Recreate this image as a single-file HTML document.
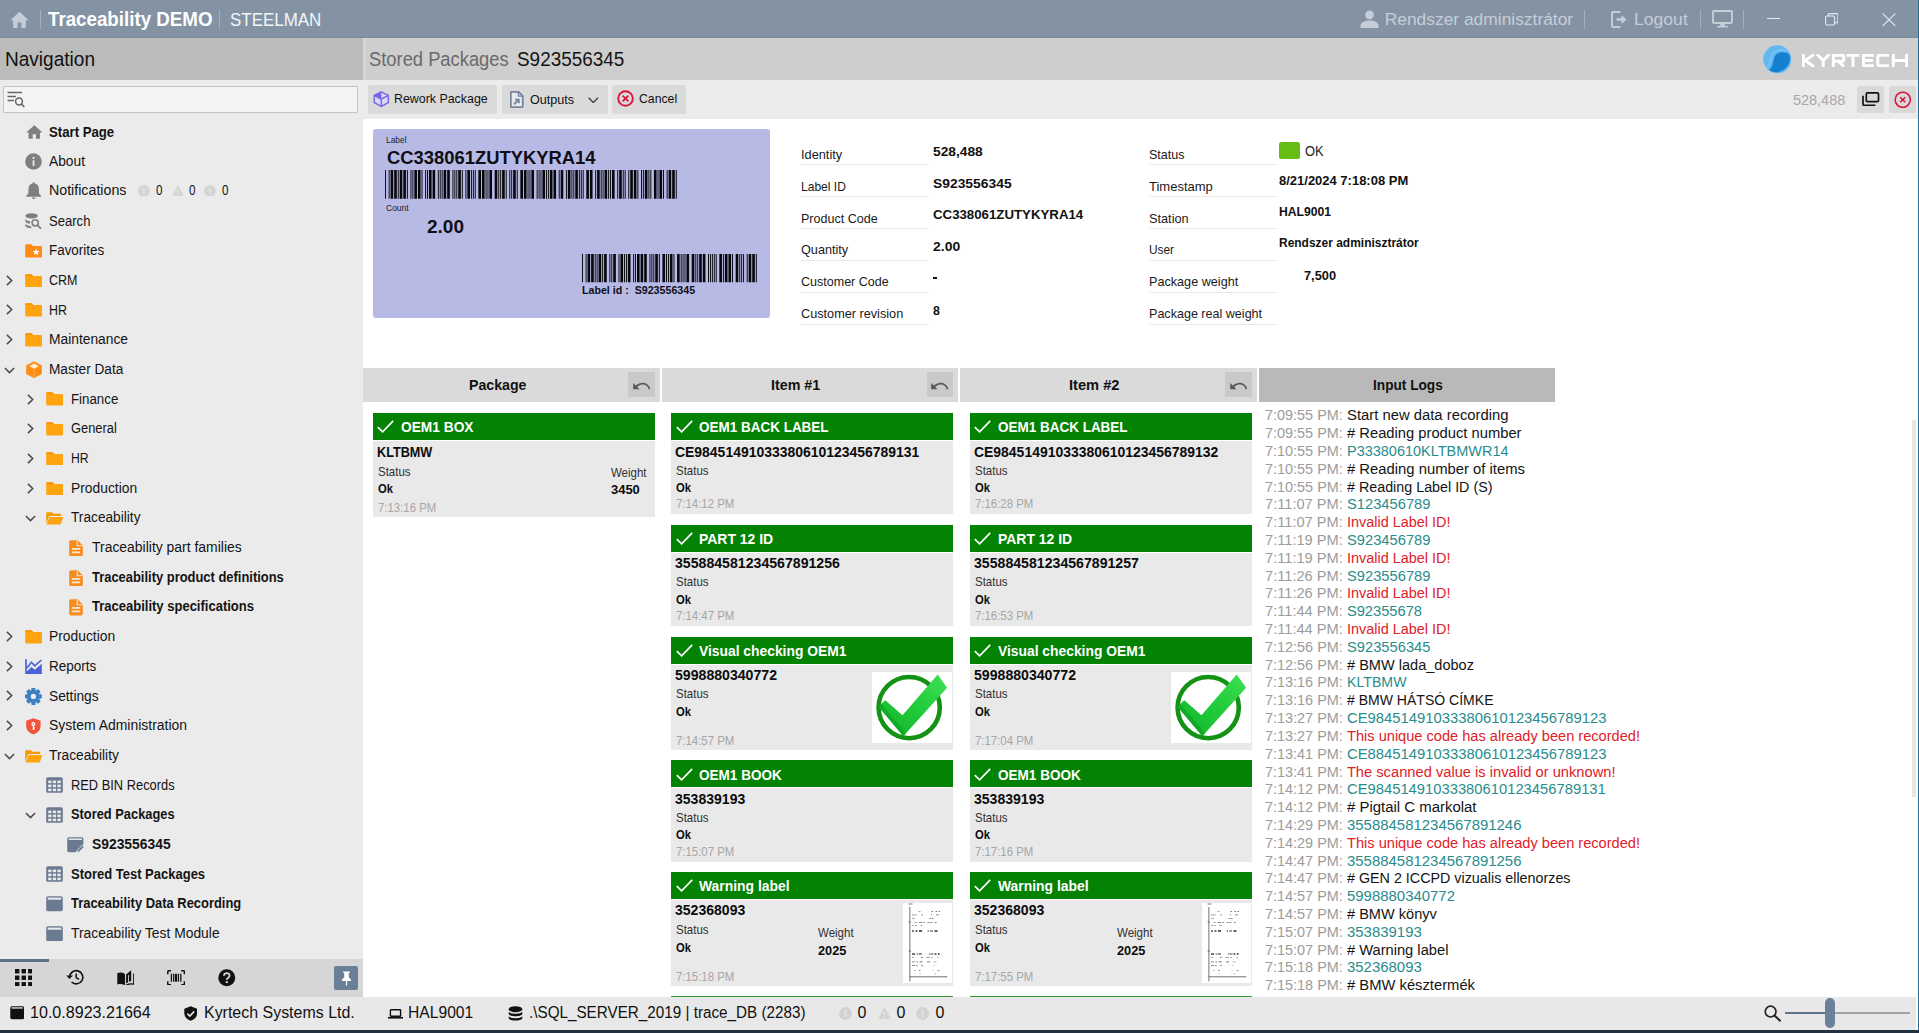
<!DOCTYPE html>
<html><head><meta charset="utf-8"><title>Traceability DEMO</title>
<style>
*{box-sizing:border-box;margin:0;padding:0}
html,body{width:1919px;height:1033px;overflow:hidden;background:#fff;font-family:"Liberation Sans",sans-serif;color:#111}
.a{position:absolute;display:block}
.t{position:absolute;white-space:pre;line-height:1;transform-origin:0 0;display:block}
</style></head><body>
<div class="a" style="left:0px;top:0px;width:1919px;height:38px;background:#8493a4;"></div>
<div class="a" style="left:0px;top:36.6px;width:1919px;height:1.4px;background:#7c8a9b;"></div>
<div class="a" style="left:0px;top:38px;width:362.5px;height:42px;background:#bbbbbb;"></div>
<div class="a" style="left:362.5px;top:38px;width:1557px;height:42px;background:#cecece;"></div>
<div class="a" style="left:362.5px;top:38px;width:3px;height:42px;background:#d6d6d6;"></div>
<div class="a" style="left:0px;top:80px;width:362.5px;height:880px;background:#ebebeb;"></div>
<div class="a" style="left:362.5px;top:80px;width:1557px;height:38.5px;background:#ebebeb;"></div>
<div class="a" style="left:0px;top:958.75px;width:362.5px;height:38.5px;background:#d6d6d6;"></div>
<div class="a" style="left:0px;top:958.75px;width:48.75px;height:3.25px;background:#5e7189;"></div>
<div class="a" style="left:0px;top:997px;width:1916.3px;height:32.7px;background:#e8e8e8;"></div>
<div class="a" style="left:0px;top:1029.7px;width:1919px;height:4px;background:#22313f;"></div>
<div class="a" style="left:1918px;top:0px;width:1.2px;height:1030px;background:#2c6a92;"></div>
<svg class="a" style="left:9.5px;top:10.5px;" width="19" height="17.5" viewBox="0 0 24 22"><path d="M12 1 L0.5 11.5 H4 V21.5 H9.5 V14.5 H14.5 V21.5 H20 V11.5 H23.5 Z" fill="#c5cdd7"/></svg>
<div class="a" style="left:40px;top:9.5px;width:1px;height:19px;background:#a3afbd;"></div>
<span class="t" style="left:47.50px;top:10.00px;font-size:19.3px;color:#fff;font-weight:700;transform:scaleX(0.9716);">Traceability DEMO</span>
<div class="a" style="left:218.7px;top:9.5px;width:1px;height:19px;background:#a3afbd;"></div>
<span class="t" style="left:230.30px;top:11.00px;font-size:18.2px;color:#f2f5f8;transform:scaleX(0.9312);">STEELMAN</span>
<svg class="a" style="left:1359.5px;top:9.7px;" width="19" height="18.3" viewBox="0 0 20 19"><circle cx="10" cy="5" r="4.6" fill="#c5cdd7"/><path d="M0.5 19 V16.5 C0.5 12.5 6 11 10 11 S19.5 12.5 19.5 16.5 V19 Z" fill="#c5cdd7"/></svg>
<span class="t" style="left:1384.70px;top:11.00px;font-size:17.4px;color:#c5cdd7;">Rendszer adminisztrátor</span>
<div class="a" style="left:1584px;top:9.5px;width:1px;height:19px;background:#a3afbd;"></div>
<svg class="a" style="left:1610.5px;top:10.5px;" width="16" height="17" viewBox="0 0 16 17"><path d="M9.5 1 H2 Q1 1 1 2 V15 Q1 16 2 16 H9.5" fill="none" stroke="#c5cdd7" stroke-width="1.9"/><path d="M5.5 7.2 H10.5 V4 L15.5 8.5 L10.5 13 V9.8 H5.5 Z" fill="#c5cdd7"/></svg>
<span class="t" style="left:1634.20px;top:11.00px;font-size:17.4px;color:#c5cdd7;transform:scaleX(1.0112);">Logout</span>
<div class="a" style="left:1700.3px;top:9.5px;width:1px;height:19px;background:#a3afbd;"></div>
<svg class="a" style="left:1711.5px;top:10px;" width="21" height="18" viewBox="0 0 21 18"><rect x="1" y="1" width="19" height="12" rx="1" fill="none" stroke="#c5cdd7" stroke-width="1.9"/><path d="M8.5 13.5 H12.5 L13.3 16 H16 V17.6 H5 V16 H7.7 Z" fill="#c5cdd7"/></svg>
<div class="a" style="left:1743px;top:9.5px;width:1px;height:19px;background:#a3afbd;"></div>
<div class="a" style="left:1767px;top:18.2px;width:12.5px;height:1.2px;background:#e6ebf0;"></div>
<svg class="a" style="left:1824.5px;top:13px;" width="13.5" height="12.5" viewBox="0 0 13.5 12.5"><rect x="0.6" y="3" width="9" height="9" rx="1.5" fill="none" stroke="#e6ebf0" stroke-width="1.1"/><path d="M3.2 3 V2 Q3.2 0.6 4.6 0.6 H11.5 Q12.9 0.6 12.9 2 V8.5 Q12.9 9.8 11.5 9.8 H9.8" fill="none" stroke="#e6ebf0" stroke-width="1.1"/></svg>
<svg class="a" style="left:1882px;top:13px;" width="14" height="13.5" viewBox="0 0 14 13.5"><path d="M0.7 0.7 L13.3 12.8 M13.3 0.7 L0.7 12.8" stroke="#e6ebf0" stroke-width="1.15" fill="none"/></svg>
<span class="t" style="left:5.30px;top:50.00px;font-size:19.7px;color:#111;transform:scaleX(0.9674);">Navigation</span>
<span class="t" style="left:369.30px;top:50.00px;font-size:19.7px;color:#6a6a6a;transform:scaleX(0.9317);">Stored Packages</span>
<span class="t" style="left:516.70px;top:50.00px;font-size:19.7px;color:#141414;transform:scaleX(0.9607);">S923556345</span>
<svg class="a" style="left:1763px;top:45.2px;" width="28.6" height="28.6" viewBox="0 0 29 29"><circle cx="14.5" cy="14.5" r="14.2" fill="#62b8f0"/><path d="M6.2 25.6 C11 21.5 9.5 14 13 10.2 C16.5 6.4 23 6.6 26.8 9.6 A14 14 0 0 1 6.2 25.6 Z" fill="#1680d0"/><path d="M3.6 23 C9 19.5 6.5 11.5 11 7.5 C14.5 4.5 20.5 4.2 24.6 6.6" fill="none" stroke="#8fd0fa" stroke-width="1.2" opacity=".7"/></svg>
<svg class="a" style="left:1802px;top:54.1px;" width="106" height="13" viewBox="0 0 106 13"><path d="M1.3 0 V13 M12 0.3 L3.2 6.5 L12 12.7" stroke="#fff" stroke-width="2.9" fill="none" stroke-linejoin="miter" stroke-linecap="butt"/><path d="M15 0.2 L21.2 6.6 L27.4 0.2 M21.2 6.4 V13" stroke="#fff" stroke-width="2.9" fill="none" stroke-linejoin="miter" stroke-linecap="butt"/><path d="M31.3 13 V1.3 H40 Q41.8 1.3 41.8 3 V5.6 Q41.8 7.3 40 7.3 H31.3 M36.5 7.3 L42 12.8" stroke="#fff" stroke-width="2.9" fill="none" stroke-linejoin="miter" stroke-linecap="butt"/><path d="M44.5 1.3 H57.5 M51 1.3 V13" stroke="#fff" stroke-width="2.9" fill="none" stroke-linejoin="miter" stroke-linecap="butt"/><path d="M72 1.3 H61.5 V11.7 H72 M61.5 6.5 H71" stroke="#fff" stroke-width="2.9" fill="none" stroke-linejoin="miter" stroke-linecap="butt"/><path d="M87 1.3 H77.5 Q75.8 1.3 75.8 3 V10 Q75.8 11.7 77.5 11.7 H87" stroke="#fff" stroke-width="2.9" fill="none" stroke-linejoin="miter" stroke-linecap="butt"/><path d="M91.3 0 V13 M104.6 0 V13 M91.3 6.5 H104.6" stroke="#fff" stroke-width="2.9" fill="none" stroke-linejoin="miter" stroke-linecap="butt"/></svg>
<div class="a" style="left:2.5px;top:85.5px;width:355px;height:27px;background:#f3f3f3;border:1px solid #c4c4c4;border-radius:1px;"></div>
<svg class="a" style="left:6.5px;top:90.5px;" width="18" height="17" viewBox="0 0 18 17"><path d="M0.5 1.5 H15 M0.5 5.5 H9 M0.5 9.5 H7" stroke="#666" stroke-width="1.5" fill="none"/><circle cx="12" cy="10.5" r="3.4" fill="none" stroke="#666" stroke-width="1.5"/><path d="M14.4 13 L17.3 16" stroke="#666" stroke-width="1.7"/></svg>
<div class="a" style="left:368px;top:85.4px;width:128.8px;height:28.2px;background:#dadada;border-radius:2px;"></div>
<div class="a" style="left:502.3px;top:85.4px;width:105.4px;height:28.2px;background:#dadada;border-radius:2px;"></div>
<div class="a" style="left:612.1px;top:85.4px;width:73.6px;height:28.2px;background:#dadada;border-radius:2px;"></div>
<svg class="a" style="left:373px;top:90.6px;" width="16.6" height="16.4" viewBox="0 0 17 17"><path d="M8.5 1 L15.8 4.6 V12 L8.5 16 L1.2 12 V4.6 Z" fill="#d9d6f7" stroke="#7467e6" stroke-width="1.5" stroke-linejoin="round"/><path d="M1.2 4.6 L8.5 8.4 L15.8 4.6 M8.5 8.4 V16" fill="none" stroke="#7467e6" stroke-width="1.5"/><path d="M8.5 1 L1.2 4.6 L8.5 8.4 Z" fill="#7467e6"/></svg>
<span class="t" style="left:394.20px;top:92.00px;font-size:13.3px;color:#111;transform:scaleX(0.9322);">Rework Package</span>
<svg class="a" style="left:510px;top:91.3px;" width="13.6" height="17" viewBox="0 0 13.6 17"><path d="M1.8 0.8 H8.6 L12.8 5 V15 Q12.8 16.2 11.6 16.2 H1.8 Q0.8 16.2 0.8 15 V1.8 Q0.8 0.8 1.8 0.8 Z" fill="#e6e9ee" stroke="#76859a" stroke-width="1.8"/><path d="M8.4 0.8 V5.2 H12.8" fill="none" stroke="#76859a" stroke-width="1.3"/><path d="M4 13.3 L8 9.3 M5.2 8.6 H8.8 V12.2" stroke="#76859a" stroke-width="1.8" fill="none"/></svg>
<span class="t" style="left:530.00px;top:93.00px;font-size:13.3px;color:#111;transform:scaleX(0.9446);">Outputs</span>
<svg class="a" style="left:588px;top:96.5px;" width="10.6" height="6.6" viewBox="0 0 10.6 6.6"><path d="M0.6 0.7 L5.3 5.6 L10 0.7" fill="none" stroke="#444" stroke-width="1.4"/></svg>
<svg class="a" style="left:617px;top:90.4px;" width="17" height="17" viewBox="0 0 17 17"><circle cx="8.5" cy="8.5" r="7.3" fill="none" stroke="#dc143c" stroke-width="1.9"/><path d="M5.6 5.6 L11.4 11.4 M11.4 5.6 L5.6 11.4" stroke="#dc143c" stroke-width="1.7"/></svg>
<span class="t" style="left:638.50px;top:92.00px;font-size:13.3px;color:#111;transform:scaleX(0.9205);">Cancel</span>
<span class="t" style="left:1793.20px;top:92.00px;font-size:15px;color:#a8a8a8;transform:scaleX(0.9625);">528,488</span>
<div class="a" style="left:1857px;top:85.6px;width:26.7px;height:27px;background:#d9d9d9;border-radius:2px;"></div>
<div class="a" style="left:1889.3px;top:85.6px;width:26.5px;height:27px;background:#d9d9d9;border-radius:2px;"></div>
<svg class="a" style="left:1862px;top:91.5px;" width="17.5" height="14.5" viewBox="0 0 17.5 14.5"><rect x="4.3" y="0.9" width="12.2" height="8.8" rx="1.2" fill="none" stroke="#111" stroke-width="1.7"/><path d="M1 3.8 V12 Q1 13.4 2.4 13.4 H13.4" fill="none" stroke="#111" stroke-width="1.7"/></svg>
<svg class="a" style="left:1893.7px;top:90.5px;" width="17.5" height="17.5" viewBox="0 0 17.5 17.5"><circle cx="8.75" cy="8.75" r="7.6" fill="none" stroke="#dc143c" stroke-width="1.5"/><path d="M6.2 6.2 L11.3 11.3 M11.3 6.2 L6.2 11.3" stroke="#dc143c" stroke-width="1.6"/></svg>
<svg class="a" style="left:14.5px;top:968.8px;" width="17.5" height="17.5" viewBox="0 0 17.5 17.5"><rect x="0" y="0" width="4.4" height="4.4" fill="#111"/><rect x="6.55" y="0" width="4.4" height="4.4" fill="#111"/><rect x="13.1" y="0" width="4.4" height="4.4" fill="#111"/><rect x="0" y="6.55" width="4.4" height="4.4" fill="#111"/><rect x="6.55" y="6.55" width="4.4" height="4.4" fill="#111"/><rect x="13.1" y="6.55" width="4.4" height="4.4" fill="#111"/><rect x="0" y="13.1" width="4.4" height="4.4" fill="#111"/><rect x="6.55" y="13.1" width="4.4" height="4.4" fill="#111"/><rect x="13.1" y="13.1" width="4.4" height="4.4" fill="#111"/></svg>
<svg class="a" style="left:66px;top:969.3px;" width="17.5" height="16.5" viewBox="0 0 17.5 16.5"><path d="M3.6 8.2 A6.6 6.6 0 1 1 5.6 13" fill="none" stroke="#111" stroke-width="1.6"/><path d="M0.3 6.4 L3.5 10 L7 6.4 Z" fill="#111"/><path d="M10.2 4.6 V8.7 L13 10.4" fill="none" stroke="#111" stroke-width="1.5"/></svg>
<svg class="a" style="left:116.6px;top:969.6px;" width="17.8" height="15.8" viewBox="0 0 17.8 15.8"><path d="M0.3 3.2 C2.8 2.2 5.6 2.4 8 4 V15.2 C5.6 13.8 2.8 13.6 0.3 14.4 Z" fill="#111"/><path d="M9.1 4.6 L14.2 0.3 V10.8 L11.9 11.9 V4.6 L11 5.4 V12.3 L9.1 13.4 Z" fill="#111"/><path d="M16.7 3.4 V14.2 C14 13.6 11.4 13.9 9 15.3" fill="none" stroke="#111" stroke-width="1.2"/></svg>
<svg class="a" style="left:167px;top:969.8px;" width="18.2" height="15.5" viewBox="0 0 18.2 15.5"><path d="M0.8 4.2 V1.6 Q0.8 0.8 1.6 0.8 H4 M14.2 0.8 H16.6 Q17.4 0.8 17.4 1.6 V4.2 M17.4 11.3 V13.9 Q17.4 14.7 16.6 14.7 H14.2 M4 14.7 H1.6 Q0.8 14.7 0.8 13.9 V11.3" fill="none" stroke="#111" stroke-width="1.5"/><path d="M4.4 3.8 V11.7 M6.7 3.8 V11.7 M11.4 3.8 V11.7 M13.8 3.8 V11.7" stroke="#111" stroke-width="1.3"/><path d="M9 3.8 V11.7" stroke="#111" stroke-width="2"/></svg>
<svg class="a" style="left:218px;top:969px;" width="17.5" height="17.5" viewBox="0 0 17.5 17.5"><circle cx="8.75" cy="8.75" r="8.5" fill="#111"/><path d="M6 6.7 C6 3.3 11.6 3.3 11.6 6.6 C11.6 8.7 8.8 8.7 8.8 10.8" fill="none" stroke="#d6d6d6" stroke-width="1.8"/><rect x="7.8" y="12.1" width="2" height="2" fill="#d6d6d6"/></svg>
<div class="a" style="left:334.3px;top:966.3px;width:23.3px;height:23.3px;background:#6a7e96;border-radius:2px;"></div>
<svg class="a" style="left:340.5px;top:970.5px;" width="11" height="15" viewBox="0 0 11 15"><path d="M2.2 0.5 H8.8 V2 H7.8 V6.3 L10 8.5 V10 H6.1 V14.5 H4.9 V10 H1 V8.5 L3.2 6.3 V2 H2.2 Z" fill="#fff"/></svg>
<svg class="a" style="left:9.5px;top:1006.2px;" width="14.5" height="13.5" viewBox="0 0 14.5 13.5"><rect x="0.3" y="0.3" width="13.9" height="12.9" rx="1.6" fill="#111"/><rect x="1.6" y="1.3" width="11.3" height="1.3" fill="#e8e8e8"/></svg>
<span class="t" style="left:30.00px;top:1005.00px;font-size:16px;color:#111;transform:scaleX(1.0052);">10.0.8923.21664</span>
<svg class="a" style="left:183.7px;top:1006px;" width="13.5" height="15" viewBox="0 0 13.5 15"><path d="M6.75 0.3 L13.2 2.8 V7 C13.2 11 10 13.8 6.75 14.8 C3.5 13.8 0.3 11 0.3 7 V2.8 Z" fill="#111"/><path d="M3.4 7.6 L5.8 10 L10.2 5.4" fill="none" stroke="#e8e8e8" stroke-width="1.6"/></svg>
<span class="t" style="left:203.75px;top:1005.00px;font-size:16px;color:#111;transform:scaleX(0.9972);">Kyrtech Systems Ltd.</span>
<svg class="a" style="left:387.5px;top:1008.5px;" width="15" height="10" viewBox="0 0 15 10"><rect x="2.4" y="0.7" width="10.2" height="6.6" rx="0.6" fill="none" stroke="#111" stroke-width="1.4"/><rect x="0" y="8" width="15" height="1.6" fill="#111"/></svg>
<span class="t" style="left:408.00px;top:1005.00px;font-size:16px;color:#111;transform:scaleX(0.9780);">HAL9001</span>
<svg class="a" style="left:507.5px;top:1005.8px;" width="15" height="15.4" viewBox="0 0 15 15.4"><ellipse cx="7.5" cy="3.2" rx="6.8" ry="3" fill="#111"/><path d="M0.7 5.6 C1.5 8.6 13.5 8.6 14.3 5.6 V8 C13.5 11 1.5 11 0.7 8 Z" fill="#111"/><path d="M0.7 10 C1.5 13 13.5 13 14.3 10 V12.2 C13.5 15.3 1.5 15.3 0.7 12.2 Z" fill="#111"/></svg>
<span class="t" style="left:528.50px;top:1005.00px;font-size:16px;color:#111;transform:scaleX(0.9526);">.\SQL_SERVER_2019 | trace_DB (2283)</span>
<svg class="a" style="left:838.5px;top:1006.5px;" width="13" height="13" viewBox="0 0 13 13"><circle cx="6.5" cy="6.5" r="6.5" fill="#d2d2d2"/><rect x="5.8" y="5.4" width="1.4" height="4.6" fill="#e8e8e8"/><rect x="5.8" y="3" width="1.4" height="1.5" fill="#e8e8e8"/></svg>
<span class="t" style="left:857.50px;top:1005.00px;font-size:16px;color:#111;">0</span>
<svg class="a" style="left:877.5px;top:1006.8px;" width="13" height="12" viewBox="0 0 13 12"><path d="M6.5 0.3 L12.8 11.7 H0.2 Z" fill="#d2d2d2"/><rect x="5.9" y="4.3" width="1.2" height="4" fill="#e8e8e8"/><rect x="5.9" y="9" width="1.2" height="1.3" fill="#e8e8e8"/></svg>
<span class="t" style="left:896.50px;top:1005.00px;font-size:16px;color:#111;">0</span>
<svg class="a" style="left:916px;top:1006.5px;" width="13" height="13" viewBox="0 0 13 13"><circle cx="6.5" cy="6.5" r="6.5" fill="#d2d2d2"/><rect x="5.8" y="3" width="1.4" height="4.6" fill="#e8e8e8"/><rect x="5.8" y="8.6" width="1.4" height="1.5" fill="#e8e8e8"/></svg>
<span class="t" style="left:935.50px;top:1005.00px;font-size:16px;color:#111;">0</span>
<svg class="a" style="left:1764px;top:1004.5px;" width="17.5" height="17" viewBox="0 0 17.5 17"><circle cx="6.6" cy="6.6" r="5.4" fill="none" stroke="#222" stroke-width="1.7"/><path d="M10.5 10.5 L16.6 16.2" stroke="#222" stroke-width="2"/></svg>
<div class="a" style="left:1785.2px;top:1012px;width:45px;height:2px;background:#5f728a;"></div>
<div class="a" style="left:1830px;top:1012px;width:80px;height:2px;background:#a3a3a3;"></div>
<div class="a" style="left:1825px;top:998px;width:9.8px;height:30px;background:#6c809a;border-radius:5px;"></div>
<svg class="a" style="left:25.6px;top:125.4px;" width="16.6" height="14" viewBox="0 0 16.6 14"><path d="M8.3 0.2 L0.2 7.4 H2.6 V13.8 H6.7 V9.2 H9.9 V13.8 H14 V7.4 H16.4 Z" fill="#7f7f7f"/></svg>
<span class="t" style="left:49.20px;top:125.00px;font-size:14px;color:#141414;font-weight:700;transform:scaleX(0.9415);">Start Page</span>
<svg class="a" style="left:25px;top:153.4px;" width="17" height="17" viewBox="0 0 17 17"><circle cx="8.5" cy="8.5" r="8.3" fill="#7f7f7f"/><rect x="7.6" y="7.3" width="1.8" height="5.6" fill="#ebebeb"/><rect x="7.6" y="4.1" width="1.8" height="1.9" fill="#ebebeb"/></svg>
<span class="t" style="left:49.20px;top:154.00px;font-size:14px;color:#141414;transform:scaleX(0.9838);">About</span>
<svg class="a" style="left:25.8px;top:181.8px;" width="15.4" height="17.4" viewBox="0 0 15.4 17.4"><path d="M7.7 0.3 Q8.9 0.3 8.9 1.6 C11.6 2.2 13 4.4 13 7.2 V11.6 L15.2 13.8 V14.8 H0.2 V13.8 L2.4 11.6 V7.2 C2.4 4.4 3.8 2.2 6.5 1.6 Q6.5 0.3 7.7 0.3 Z" fill="#7f7f7f"/><path d="M6 15.6 H9.4 Q9.4 17.2 7.7 17.2 Q6 17.2 6 15.6 Z" fill="#7f7f7f"/></svg>
<span class="t" style="left:49.20px;top:183.00px;font-size:14px;color:#141414;transform:scaleX(1.0149);">Notifications</span>
<svg class="a" style="left:138.3px;top:184.6px;" width="11.8" height="11.8" viewBox="0 0 13 13"><circle cx="6.5" cy="6.5" r="6.5" fill="#d4d4d4"/><rect x="5.8" y="5.4" width="1.4" height="4.6" fill="#ebebeb"/><rect x="5.8" y="3" width="1.4" height="1.5" fill="#ebebeb"/></svg>
<span class="t" style="left:155.50px;top:183.00px;font-size:14px;color:#141414;transform:scaleX(0.8337);">0</span>
<svg class="a" style="left:171.5px;top:185px;" width="11.8" height="11" viewBox="0 0 13 12"><path d="M6.5 0.3 L12.8 11.7 H0.2 Z" fill="#d4d4d4"/><rect x="5.9" y="4.3" width="1.2" height="4" fill="#ebebeb"/><rect x="5.9" y="9" width="1.2" height="1.3" fill="#ebebeb"/></svg>
<span class="t" style="left:188.60px;top:183.00px;font-size:14px;color:#141414;transform:scaleX(0.8337);">0</span>
<svg class="a" style="left:204.4px;top:184.6px;" width="11.8" height="11.8" viewBox="0 0 13 13"><circle cx="6.5" cy="6.5" r="6.5" fill="#d4d4d4"/><rect x="5.8" y="3" width="1.4" height="4.6" fill="#ebebeb"/><rect x="5.8" y="8.6" width="1.4" height="1.5" fill="#ebebeb"/></svg>
<span class="t" style="left:221.60px;top:183.00px;font-size:14px;color:#141414;transform:scaleX(0.8337);">0</span>
<svg class="a" style="left:25.2px;top:213.4px;" width="16.6" height="16.2" viewBox="0 0 16.6 16.2"><ellipse cx="6.6" cy="2.9" rx="6.2" ry="2.7" fill="#7f7f7f"/><path d="M0.4 5.6 C0.8 7.4 3 8.2 5.4 8.3 L4.8 10.6 C2.6 10.4 0.8 9.7 0.4 8.2 Z" fill="#7f7f7f"/><path d="M0.4 10.4 C0.8 12 3 12.9 5.6 13 L6.6 15.3 C3.2 15.4 0.8 14.5 0.4 12.8 Z" fill="#7f7f7f"/><circle cx="10.2" cy="9.8" r="3.1" fill="none" stroke="#7f7f7f" stroke-width="1.6"/><path d="M12.4 12.2 L16 15.7" stroke="#7f7f7f" stroke-width="1.8"/></svg>
<span class="t" style="left:49.20px;top:214.00px;font-size:14px;color:#141414;transform:scaleX(0.9333);">Search</span>
<svg class="a" style="left:25px;top:243.8px;" width="17.2" height="13.8" viewBox="0 0 17.2 13.8"><path d="M1.4 0.2 H6.2 L8 2 H15.8 Q17 2 17 3.2 V12.4 Q17 13.6 15.8 13.6 H1.4 Q0.2 13.6 0.2 12.4 V1.4 Q0.2 0.2 1.4 0.2 Z" fill="#ff8b17"/><path d="M11.2 4.6 L12.2 6.9 L14.7 7.1 L12.8 8.7 L13.4 11.1 L11.2 9.8 L9 11.1 L9.6 8.7 L7.7 7.1 L10.2 6.9 Z" fill="#fff"/></svg>
<span class="t" style="left:49.20px;top:243.00px;font-size:14px;color:#141414;transform:scaleX(0.9587);">Favorites</span>
<svg class="a" style="left:5.6px;top:274.79px;" width="7" height="11" viewBox="0 0 7 11"><path d="M0.9 0.9 L5.7 5.5 L0.9 10.1" fill="none" stroke="#4a4a4a" stroke-width="1.5"/></svg>
<svg class="a" style="left:25px;top:273.69px;" width="17.4" height="13.6" viewBox="0 0 17.4 13.6"><path d="M1.4 0.2 H6.4 L8.2 2 H16 Q17.2 2 17.2 3.2 V12.2 Q17.2 13.4 16 13.4 H1.4 Q0.2 13.4 0.2 12.2 V1.4 Q0.2 0.2 1.4 0.2 Z" fill="#ffa310"/><path d="M0.2 2.6 V1.4 Q0.2 0.2 1.4 0.2 H6.4 L8.2 2 H1.2 Z" fill="#f79400"/></svg>
<span class="t" style="left:49.20px;top:273.00px;font-size:14px;color:#141414;transform:scaleX(0.8937);">CRM</span>
<svg class="a" style="left:5.6px;top:304.48px;" width="7" height="11" viewBox="0 0 7 11"><path d="M0.9 0.9 L5.7 5.5 L0.9 10.1" fill="none" stroke="#4a4a4a" stroke-width="1.5"/></svg>
<svg class="a" style="left:25px;top:303.38px;" width="17.4" height="13.6" viewBox="0 0 17.4 13.6"><path d="M1.4 0.2 H6.4 L8.2 2 H16 Q17.2 2 17.2 3.2 V12.2 Q17.2 13.4 16 13.4 H1.4 Q0.2 13.4 0.2 12.2 V1.4 Q0.2 0.2 1.4 0.2 Z" fill="#ffa310"/><path d="M0.2 2.6 V1.4 Q0.2 0.2 1.4 0.2 H6.4 L8.2 2 H1.2 Z" fill="#f79400"/></svg>
<span class="t" style="left:49.20px;top:303.00px;font-size:14px;color:#141414;transform:scaleX(0.8896);">HR</span>
<svg class="a" style="left:5.6px;top:334.17px;" width="7" height="11" viewBox="0 0 7 11"><path d="M0.9 0.9 L5.7 5.5 L0.9 10.1" fill="none" stroke="#4a4a4a" stroke-width="1.5"/></svg>
<svg class="a" style="left:25px;top:333.07px;" width="17.4" height="13.6" viewBox="0 0 17.4 13.6"><path d="M1.4 0.2 H6.4 L8.2 2 H16 Q17.2 2 17.2 3.2 V12.2 Q17.2 13.4 16 13.4 H1.4 Q0.2 13.4 0.2 12.2 V1.4 Q0.2 0.2 1.4 0.2 Z" fill="#ffa310"/><path d="M0.2 2.6 V1.4 Q0.2 0.2 1.4 0.2 H6.4 L8.2 2 H1.2 Z" fill="#f79400"/></svg>
<span class="t" style="left:49.20px;top:332.00px;font-size:14px;color:#141414;transform:scaleX(0.9854);">Maintenance</span>
<svg class="a" style="left:4px;top:366.76px;" width="11" height="7" viewBox="0 0 11 7"><path d="M0.9 0.9 L5.5 5.6 L10.1 0.9" fill="none" stroke="#4a4a4a" stroke-width="1.5"/></svg>
<svg class="a" style="left:25.6px;top:360.76px;" width="16" height="17.4" viewBox="0 0 16 17.4"><path d="M8 0.2 L15.8 4.4 V13 L8 17.2 L0.2 13 V4.4 Z" fill="#ff8c12"/><path d="M8 2.6 L12.8 5.2 L8 7.8 L3.2 5.2 Z" fill="#fff1dc"/><path d="M8 8.6 V16" stroke="#ffb050" stroke-width="1"/></svg>
<span class="t" style="left:49.20px;top:362.00px;font-size:14px;color:#141414;transform:scaleX(0.9744);">Master Data</span>
<svg class="a" style="left:26.7px;top:393.55px;" width="7" height="11" viewBox="0 0 7 11"><path d="M0.9 0.9 L5.7 5.5 L0.9 10.1" fill="none" stroke="#4a4a4a" stroke-width="1.5"/></svg>
<svg class="a" style="left:46.1px;top:392.45px;" width="17.4" height="13.6" viewBox="0 0 17.4 13.6"><path d="M1.4 0.2 H6.4 L8.2 2 H16 Q17.2 2 17.2 3.2 V12.2 Q17.2 13.4 16 13.4 H1.4 Q0.2 13.4 0.2 12.2 V1.4 Q0.2 0.2 1.4 0.2 Z" fill="#ffa310"/><path d="M0.2 2.6 V1.4 Q0.2 0.2 1.4 0.2 H6.4 L8.2 2 H1.2 Z" fill="#f79400"/></svg>
<span class="t" style="left:70.55px;top:392.00px;font-size:14px;color:#141414;transform:scaleX(0.9496);">Finance</span>
<svg class="a" style="left:26.7px;top:423.24px;" width="7" height="11" viewBox="0 0 7 11"><path d="M0.9 0.9 L5.7 5.5 L0.9 10.1" fill="none" stroke="#4a4a4a" stroke-width="1.5"/></svg>
<svg class="a" style="left:46.1px;top:422.14px;" width="17.4" height="13.6" viewBox="0 0 17.4 13.6"><path d="M1.4 0.2 H6.4 L8.2 2 H16 Q17.2 2 17.2 3.2 V12.2 Q17.2 13.4 16 13.4 H1.4 Q0.2 13.4 0.2 12.2 V1.4 Q0.2 0.2 1.4 0.2 Z" fill="#ffa310"/><path d="M0.2 2.6 V1.4 Q0.2 0.2 1.4 0.2 H6.4 L8.2 2 H1.2 Z" fill="#f79400"/></svg>
<span class="t" style="left:70.55px;top:421.00px;font-size:14px;color:#141414;transform:scaleX(0.9194);">General</span>
<svg class="a" style="left:26.7px;top:452.93px;" width="7" height="11" viewBox="0 0 7 11"><path d="M0.9 0.9 L5.7 5.5 L0.9 10.1" fill="none" stroke="#4a4a4a" stroke-width="1.5"/></svg>
<svg class="a" style="left:46.1px;top:451.83px;" width="17.4" height="13.6" viewBox="0 0 17.4 13.6"><path d="M1.4 0.2 H6.4 L8.2 2 H16 Q17.2 2 17.2 3.2 V12.2 Q17.2 13.4 16 13.4 H1.4 Q0.2 13.4 0.2 12.2 V1.4 Q0.2 0.2 1.4 0.2 Z" fill="#ffa310"/><path d="M0.2 2.6 V1.4 Q0.2 0.2 1.4 0.2 H6.4 L8.2 2 H1.2 Z" fill="#f79400"/></svg>
<span class="t" style="left:70.55px;top:451.00px;font-size:14px;color:#141414;transform:scaleX(0.8698);">HR</span>
<svg class="a" style="left:26.7px;top:482.62px;" width="7" height="11" viewBox="0 0 7 11"><path d="M0.9 0.9 L5.7 5.5 L0.9 10.1" fill="none" stroke="#4a4a4a" stroke-width="1.5"/></svg>
<svg class="a" style="left:46.1px;top:481.52px;" width="17.4" height="13.6" viewBox="0 0 17.4 13.6"><path d="M1.4 0.2 H6.4 L8.2 2 H16 Q17.2 2 17.2 3.2 V12.2 Q17.2 13.4 16 13.4 H1.4 Q0.2 13.4 0.2 12.2 V1.4 Q0.2 0.2 1.4 0.2 Z" fill="#ffa310"/><path d="M0.2 2.6 V1.4 Q0.2 0.2 1.4 0.2 H6.4 L8.2 2 H1.2 Z" fill="#f79400"/></svg>
<span class="t" style="left:70.55px;top:481.00px;font-size:14px;color:#141414;transform:scaleX(0.9875);">Production</span>
<svg class="a" style="left:25.1px;top:515.21px;" width="11" height="7" viewBox="0 0 11 7"><path d="M0.9 0.9 L5.5 5.6 L10.1 0.9" fill="none" stroke="#4a4a4a" stroke-width="1.5"/></svg>
<svg class="a" style="left:46.1px;top:512.21px;" width="17.4" height="12.8" viewBox="0 0 17.4 12.8"><path d="M1.3 0.2 H6 L7.6 1.8 H14.2 Q15.3 1.8 15.3 2.9 V4 H4.2 Q3.2 4 2.9 5 L0.2 11.5 V1.3 Q0.2 0.2 1.3 0.2 Z" fill="#f79a08"/><path d="M4.6 5 H16.4 Q17.5 5 17.1 6 L15 11.8 Q14.7 12.6 13.8 12.6 H1.2 Q0.4 12.6 0.8 11.7 L3.2 5.9 Q3.6 5 4.6 5 Z" fill="#ffa310"/></svg>
<span class="t" style="left:70.55px;top:510.00px;font-size:14px;color:#141414;transform:scaleX(0.9780);">Traceability</span>
<svg class="a" style="left:69.1px;top:539.9px;" width="14" height="16.6" viewBox="0 0 14 16.6"><path d="M2 0.2 H8.6 L13.8 5.4 V14.6 Q13.8 16.4 12 16.4 H2 Q0.2 16.4 0.2 14.6 V2 Q0.2 0.2 2 0.2 Z" fill="#f68b1e"/><path d="M8.2 0.8 V5.8 H13.2" fill="none" stroke="#ebebeb" stroke-width="1.1"/><path d="M2.8 8.9 H11.2 M2.8 12.3 H11.2" stroke="#fde7cf" stroke-width="1.7"/></svg>
<span class="t" style="left:91.90px;top:540.00px;font-size:14px;color:#141414;transform:scaleX(0.9952);">Traceability part families</span>
<svg class="a" style="left:69.1px;top:569.59px;" width="14" height="16.6" viewBox="0 0 14 16.6"><path d="M2 0.2 H8.6 L13.8 5.4 V14.6 Q13.8 16.4 12 16.4 H2 Q0.2 16.4 0.2 14.6 V2 Q0.2 0.2 2 0.2 Z" fill="#f68b1e"/><path d="M8.2 0.8 V5.8 H13.2" fill="none" stroke="#ebebeb" stroke-width="1.1"/><path d="M2.8 8.9 H11.2 M2.8 12.3 H11.2" stroke="#fde7cf" stroke-width="1.7"/></svg>
<span class="t" style="left:91.90px;top:570.00px;font-size:14px;color:#141414;font-weight:700;transform:scaleX(0.9234);">Traceability product definitions</span>
<svg class="a" style="left:69.1px;top:599.28px;" width="14" height="16.6" viewBox="0 0 14 16.6"><path d="M2 0.2 H8.6 L13.8 5.4 V14.6 Q13.8 16.4 12 16.4 H2 Q0.2 16.4 0.2 14.6 V2 Q0.2 0.2 2 0.2 Z" fill="#f68b1e"/><path d="M8.2 0.8 V5.8 H13.2" fill="none" stroke="#ebebeb" stroke-width="1.1"/><path d="M2.8 8.9 H11.2 M2.8 12.3 H11.2" stroke="#fde7cf" stroke-width="1.7"/></svg>
<span class="t" style="left:91.90px;top:599.00px;font-size:14px;color:#141414;font-weight:700;transform:scaleX(0.9294);">Traceability specifications</span>
<svg class="a" style="left:5.6px;top:631.07px;" width="7" height="11" viewBox="0 0 7 11"><path d="M0.9 0.9 L5.7 5.5 L0.9 10.1" fill="none" stroke="#4a4a4a" stroke-width="1.5"/></svg>
<svg class="a" style="left:25px;top:629.97px;" width="17.4" height="13.6" viewBox="0 0 17.4 13.6"><path d="M1.4 0.2 H6.4 L8.2 2 H16 Q17.2 2 17.2 3.2 V12.2 Q17.2 13.4 16 13.4 H1.4 Q0.2 13.4 0.2 12.2 V1.4 Q0.2 0.2 1.4 0.2 Z" fill="#ffa310"/><path d="M0.2 2.6 V1.4 Q0.2 0.2 1.4 0.2 H6.4 L8.2 2 H1.2 Z" fill="#f79400"/></svg>
<span class="t" style="left:49.20px;top:629.00px;font-size:14px;color:#141414;transform:scaleX(0.9890);">Production</span>
<svg class="a" style="left:5.6px;top:660.76px;" width="7" height="11" viewBox="0 0 7 11"><path d="M0.9 0.9 L5.7 5.5 L0.9 10.1" fill="none" stroke="#4a4a4a" stroke-width="1.5"/></svg>
<svg class="a" style="left:25px;top:658.86px;" width="17.2" height="15.2" viewBox="0 0 17.2 15.2"><path d="M1 0.2 V14.4 H17" fill="none" stroke="#4a62d8" stroke-width="1.7"/><path d="M1.8 14.2 V12.6 L6.4 8 L9.8 10.8 L16.8 4.8 V14.2 Z" fill="#4a62d8"/><path d="M2 9 L6.4 3.2 L9.8 6.8 L16.4 1" fill="none" stroke="#4a62d8" stroke-width="1.6"/></svg>
<span class="t" style="left:49.20px;top:659.00px;font-size:14px;color:#141414;transform:scaleX(0.9647);">Reports</span>
<svg class="a" style="left:5.6px;top:690.45px;" width="7" height="11" viewBox="0 0 7 11"><path d="M0.9 0.9 L5.7 5.5 L0.9 10.1" fill="none" stroke="#4a4a4a" stroke-width="1.5"/></svg>
<svg class="a" style="left:25.2px;top:687.75px;" width="16.8" height="16.8" viewBox="0 0 16.8 16.8"><rect x="6.3" y="-0.1" width="4.2" height="4.4" rx="1" fill="#3d7fc0" transform="rotate(0 8.4 8.4)"/><rect x="6.3" y="-0.1" width="4.2" height="4.4" rx="1" fill="#3d7fc0" transform="rotate(45 8.4 8.4)"/><rect x="6.3" y="-0.1" width="4.2" height="4.4" rx="1" fill="#3d7fc0" transform="rotate(90 8.4 8.4)"/><rect x="6.3" y="-0.1" width="4.2" height="4.4" rx="1" fill="#3d7fc0" transform="rotate(135 8.4 8.4)"/><rect x="6.3" y="-0.1" width="4.2" height="4.4" rx="1" fill="#3d7fc0" transform="rotate(180 8.4 8.4)"/><rect x="6.3" y="-0.1" width="4.2" height="4.4" rx="1" fill="#3d7fc0" transform="rotate(225 8.4 8.4)"/><rect x="6.3" y="-0.1" width="4.2" height="4.4" rx="1" fill="#3d7fc0" transform="rotate(270 8.4 8.4)"/><rect x="6.3" y="-0.1" width="4.2" height="4.4" rx="1" fill="#3d7fc0" transform="rotate(315 8.4 8.4)"/><circle cx="8.4" cy="8.4" r="6.3" fill="#3d7fc0"/><circle cx="8.4" cy="8.4" r="2.6" fill="#ebebeb"/></svg>
<span class="t" style="left:49.20px;top:689.00px;font-size:14px;color:#141414;transform:scaleX(0.9804);">Settings</span>
<svg class="a" style="left:5.6px;top:720.14px;" width="7" height="11" viewBox="0 0 7 11"><path d="M0.9 0.9 L5.7 5.5 L0.9 10.1" fill="none" stroke="#4a4a4a" stroke-width="1.5"/></svg>
<svg class="a" style="left:26.2px;top:718.24px;" width="14.8" height="16.6" viewBox="0 0 14.8 16.6"><path d="M7.4 0.2 L14.6 2.8 V8 C14.6 12.2 11.4 15.2 7.4 16.4 C3.4 15.2 0.2 12.2 0.2 8 V2.8 Z" fill="#f0563a"/><circle cx="7.4" cy="6" r="2" fill="#fff"/><path d="M7.4 7 V12 M7.4 10 H9" stroke="#fff" stroke-width="1.3"/><circle cx="7.4" cy="6" r="0.8" fill="#f0563a"/></svg>
<span class="t" style="left:49.20px;top:718.00px;font-size:14px;color:#141414;transform:scaleX(0.9971);">System Administration</span>
<svg class="a" style="left:4px;top:752.73px;" width="11" height="7" viewBox="0 0 11 7"><path d="M0.9 0.9 L5.5 5.6 L10.1 0.9" fill="none" stroke="#4a4a4a" stroke-width="1.5"/></svg>
<svg class="a" style="left:25px;top:749.73px;" width="17.4" height="12.8" viewBox="0 0 17.4 12.8"><path d="M1.3 0.2 H6 L7.6 1.8 H14.2 Q15.3 1.8 15.3 2.9 V4 H4.2 Q3.2 4 2.9 5 L0.2 11.5 V1.3 Q0.2 0.2 1.3 0.2 Z" fill="#f79a08"/><path d="M4.6 5 H16.4 Q17.5 5 17.1 6 L15 11.8 Q14.7 12.6 13.8 12.6 H1.2 Q0.4 12.6 0.8 11.7 L3.2 5.9 Q3.6 5 4.6 5 Z" fill="#ffa310"/></svg>
<span class="t" style="left:49.20px;top:748.00px;font-size:14px;color:#141414;transform:scaleX(0.9836);">Traceability</span>
<svg class="a" style="left:46.2px;top:777.42px;" width="17" height="16" viewBox="0 0 17 16"><rect x="0.2" y="0.2" width="16.6" height="15.6" rx="1.6" fill="#6b7a90"/><rect x="2.2" y="3.6" width="3.3" height="2.6" fill="#ebebeb"/><rect x="6.8" y="3.6" width="3.3" height="2.6" fill="#ebebeb"/><rect x="11.4" y="3.6" width="3.3" height="2.6" fill="#ebebeb"/><rect x="2.2" y="7.6" width="3.3" height="2.6" fill="#ebebeb"/><rect x="6.8" y="7.6" width="3.3" height="2.6" fill="#ebebeb"/><rect x="11.4" y="7.6" width="3.3" height="2.6" fill="#ebebeb"/><rect x="2.2" y="11.6" width="3.3" height="2.6" fill="#ebebeb"/><rect x="6.8" y="11.6" width="3.3" height="2.6" fill="#ebebeb"/><rect x="11.4" y="11.6" width="3.3" height="2.6" fill="#ebebeb"/></svg>
<span class="t" style="left:70.55px;top:778.00px;font-size:14px;color:#141414;transform:scaleX(0.9183);">RED BIN Records</span>
<svg class="a" style="left:25.1px;top:812.11px;" width="11" height="7" viewBox="0 0 11 7"><path d="M0.9 0.9 L5.5 5.6 L10.1 0.9" fill="none" stroke="#4a4a4a" stroke-width="1.5"/></svg>
<svg class="a" style="left:46.2px;top:807.11px;" width="17" height="16" viewBox="0 0 17 16"><rect x="0.2" y="0.2" width="16.6" height="15.6" rx="1.6" fill="#6b7a90"/><rect x="2.2" y="3.6" width="3.3" height="2.6" fill="#ebebeb"/><rect x="6.8" y="3.6" width="3.3" height="2.6" fill="#ebebeb"/><rect x="11.4" y="3.6" width="3.3" height="2.6" fill="#ebebeb"/><rect x="2.2" y="7.6" width="3.3" height="2.6" fill="#ebebeb"/><rect x="6.8" y="7.6" width="3.3" height="2.6" fill="#ebebeb"/><rect x="11.4" y="7.6" width="3.3" height="2.6" fill="#ebebeb"/><rect x="2.2" y="11.6" width="3.3" height="2.6" fill="#ebebeb"/><rect x="6.8" y="11.6" width="3.3" height="2.6" fill="#ebebeb"/><rect x="11.4" y="11.6" width="3.3" height="2.6" fill="#ebebeb"/></svg>
<span class="t" style="left:70.55px;top:807.00px;font-size:14px;color:#141414;font-weight:700;transform:scaleX(0.9181);">Stored Packages</span>
<svg class="a" style="left:67.4px;top:836.8px;" width="17.2" height="15.8" viewBox="0 0 17.2 15.8"><path d="M1.8 0.2 H14.8 Q16.4 0.2 16.4 1.8 V7.6 L8.6 15.2 H1.8 Q0.2 15.2 0.2 13.6 V1.8 Q0.2 0.2 1.8 0.2 Z" fill="#6b7a90"/><rect x="1.6" y="1.4" width="13.4" height="1.6" fill="#dfe3e8"/><path d="M10 15.6 L10.4 13.2 L15.4 8.2 L17.2 10 L12.2 15 Z" fill="#6b7a90" stroke="#ebebeb" stroke-width="0.8"/></svg>
<span class="t" style="left:91.90px;top:837.00px;font-size:14px;color:#141414;font-weight:700;transform:scaleX(0.9897);">S923556345</span>
<svg class="a" style="left:46.2px;top:866.49px;" width="17" height="16" viewBox="0 0 17 16"><rect x="0.2" y="0.2" width="16.6" height="15.6" rx="1.6" fill="#6b7a90"/><rect x="2.2" y="3.6" width="3.3" height="2.6" fill="#ebebeb"/><rect x="6.8" y="3.6" width="3.3" height="2.6" fill="#ebebeb"/><rect x="11.4" y="3.6" width="3.3" height="2.6" fill="#ebebeb"/><rect x="2.2" y="7.6" width="3.3" height="2.6" fill="#ebebeb"/><rect x="6.8" y="7.6" width="3.3" height="2.6" fill="#ebebeb"/><rect x="11.4" y="7.6" width="3.3" height="2.6" fill="#ebebeb"/><rect x="2.2" y="11.6" width="3.3" height="2.6" fill="#ebebeb"/><rect x="6.8" y="11.6" width="3.3" height="2.6" fill="#ebebeb"/><rect x="11.4" y="11.6" width="3.3" height="2.6" fill="#ebebeb"/></svg>
<span class="t" style="left:70.55px;top:867.00px;font-size:14px;color:#141414;font-weight:700;transform:scaleX(0.9281);">Stored Test Packages</span>
<svg class="a" style="left:46.2px;top:896.38px;" width="17" height="15.4" viewBox="0 0 17 15.4"><rect x="0.2" y="0.2" width="16.6" height="15" rx="1.7" fill="#6b7a90"/><rect x="1.7" y="1.6" width="13.6" height="2.1" fill="#e6e9ed"/></svg>
<span class="t" style="left:70.55px;top:896.00px;font-size:14px;color:#141414;font-weight:700;transform:scaleX(0.9230);">Traceability Data Recording</span>
<svg class="a" style="left:46.2px;top:926.07px;" width="17" height="15.4" viewBox="0 0 17 15.4"><rect x="0.2" y="0.2" width="16.6" height="15" rx="1.7" fill="#6b7a90"/><rect x="1.7" y="1.6" width="13.6" height="2.1" fill="#e6e9ed"/></svg>
<span class="t" style="left:70.55px;top:926.00px;font-size:14px;color:#141414;transform:scaleX(0.9894);">Traceability Test Module</span>
<div class="a" style="left:373.2px;top:129.2px;width:396.6px;height:189.3px;background:#b8bae6;border-radius:3px;"></div>
<span class="t" style="left:385.70px;top:136.00px;font-size:9px;color:#1c1c28;transform:scaleX(0.9305);">Label</span>
<span class="t" style="left:386.90px;top:149.00px;font-size:18.6px;color:#0e0e14;font-weight:700;transform:scaleX(0.9894);">CC338061ZUTYKYRA14</span>
<svg class="a" style="left:385.2px;top:170.1px;" width="291.8" height="28.7" viewBox="0 0 291.8 28.7"><path d="M0.00 0h0.96v28.7h-0.96zM3.60 0h0.96v28.7h-0.96zM5.52 0h2.64v28.7h-2.64zM9.12 0h2.64v28.7h-2.64zM12.72 0h0.96v28.7h-0.96zM14.64 0h2.64v28.7h-2.64zM18.24 0h2.64v28.7h-2.64zM21.84 0h0.96v28.7h-0.96zM25.44 0h0.96v28.7h-0.96zM27.36 0h0.96v28.7h-0.96zM29.28 0h2.64v28.7h-2.64zM32.88 0h2.64v28.7h-2.64zM36.48 0h0.96v28.7h-0.96zM40.07 0h0.96v28.7h-0.96zM41.99 0h0.96v28.7h-0.96zM43.91 0h2.64v28.7h-2.64zM47.51 0h2.64v28.7h-2.64zM52.79 0h0.96v28.7h-0.96zM54.71 0h0.96v28.7h-0.96zM56.63 0h0.96v28.7h-0.96zM58.55 0h2.64v28.7h-2.64zM62.15 0h2.64v28.7h-2.64zM67.43 0h0.96v28.7h-0.96zM69.35 0h0.96v28.7h-0.96zM71.27 0h0.96v28.7h-0.96zM73.19 0h2.64v28.7h-2.64zM76.79 0h0.96v28.7h-0.96zM80.39 0h0.96v28.7h-0.96zM82.31 0h2.64v28.7h-2.64zM85.91 0h0.96v28.7h-0.96zM87.83 0h0.96v28.7h-0.96zM89.75 0h0.96v28.7h-0.96zM93.35 0h2.64v28.7h-2.64zM96.95 0h2.64v28.7h-2.64zM100.55 0h0.96v28.7h-0.96zM102.47 0h0.96v28.7h-0.96zM104.39 0h2.64v28.7h-2.64zM109.66 0h2.64v28.7h-2.64zM113.26 0h0.96v28.7h-0.96zM115.18 0h0.96v28.7h-0.96zM117.10 0h2.64v28.7h-2.64zM120.70 0h0.96v28.7h-0.96zM124.30 0h0.96v28.7h-0.96zM126.22 0h0.96v28.7h-0.96zM128.14 0h2.64v28.7h-2.64zM131.74 0h0.96v28.7h-0.96zM135.34 0h2.64v28.7h-2.64zM138.94 0h2.64v28.7h-2.64zM142.54 0h0.96v28.7h-0.96zM144.46 0h0.96v28.7h-0.96zM146.38 0h2.64v28.7h-2.64zM151.66 0h0.96v28.7h-0.96zM153.58 0h0.96v28.7h-0.96zM155.50 0h0.96v28.7h-0.96zM157.42 0h2.64v28.7h-2.64zM161.02 0h0.96v28.7h-0.96zM162.94 0h0.96v28.7h-0.96zM164.86 0h2.64v28.7h-2.64zM168.46 0h2.64v28.7h-2.64zM173.74 0h0.96v28.7h-0.96zM175.66 0h2.64v28.7h-2.64zM180.94 0h0.96v28.7h-0.96zM182.85 0h2.64v28.7h-2.64zM186.45 0h0.96v28.7h-0.96zM188.37 0h0.96v28.7h-0.96zM190.29 0h2.64v28.7h-2.64zM193.89 0h0.96v28.7h-0.96zM195.81 0h0.96v28.7h-0.96zM197.73 0h0.96v28.7h-0.96zM201.33 0h2.64v28.7h-2.64zM204.93 0h2.64v28.7h-2.64zM210.21 0h0.96v28.7h-0.96zM212.13 0h2.64v28.7h-2.64zM215.73 0h0.96v28.7h-0.96zM217.65 0h0.96v28.7h-0.96zM219.57 0h2.64v28.7h-2.64zM223.17 0h0.96v28.7h-0.96zM225.09 0h0.96v28.7h-0.96zM227.01 0h2.64v28.7h-2.64zM232.29 0h0.96v28.7h-0.96zM234.21 0h2.64v28.7h-2.64zM237.81 0h0.96v28.7h-0.96zM239.73 0h0.96v28.7h-0.96zM243.33 0h0.96v28.7h-0.96zM245.25 0h2.64v28.7h-2.64zM248.85 0h2.64v28.7h-2.64zM252.45 0h0.96v28.7h-0.96zM256.04 0h0.96v28.7h-0.96zM257.96 0h0.96v28.7h-0.96zM259.88 0h2.64v28.7h-2.64zM263.48 0h0.96v28.7h-0.96zM265.40 0h0.96v28.7h-0.96zM269.00 0h2.64v28.7h-2.64zM272.60 0h0.96v28.7h-0.96zM274.52 0h2.64v28.7h-2.64zM278.12 0h0.96v28.7h-0.96zM281.72 0h0.96v28.7h-0.96zM283.64 0h2.64v28.7h-2.64zM287.24 0h2.64v28.7h-2.64zM290.84 0h0.96v28.7h-0.96z" fill="#07070c"/></svg>
<span class="t" style="left:385.70px;top:204.00px;font-size:9px;color:#1c1c28;transform:scaleX(0.9446);">Count</span>
<span class="t" style="left:427.30px;top:217.00px;font-size:19.2px;color:#0e0e14;font-weight:700;transform:scaleX(0.9904);">2.00</span>
<svg class="a" style="left:581.8px;top:254.3px;" width="174.8" height="28.3" viewBox="0 0 174.8 28.3"><path d="M0.00 0h0.96v28.3h-0.96zM3.60 0h0.96v28.3h-0.96zM5.52 0h2.64v28.3h-2.64zM9.12 0h2.64v28.3h-2.64zM12.73 0h0.96v28.3h-0.96zM14.65 0h0.96v28.3h-0.96zM16.57 0h2.64v28.3h-2.64zM20.17 0h0.96v28.3h-0.96zM22.09 0h2.64v28.3h-2.64zM27.37 0h0.96v28.3h-0.96zM29.29 0h0.96v28.3h-0.96zM31.21 0h2.64v28.3h-2.64zM36.50 0h0.96v28.3h-0.96zM38.42 0h2.64v28.3h-2.64zM42.02 0h0.96v28.3h-0.96zM43.94 0h0.96v28.3h-0.96zM45.86 0h2.64v28.3h-2.64zM51.14 0h0.96v28.3h-0.96zM53.06 0h0.96v28.3h-0.96zM54.99 0h2.64v28.3h-2.64zM58.59 0h2.64v28.3h-2.64zM62.19 0h2.64v28.3h-2.64zM67.47 0h0.96v28.3h-0.96zM69.39 0h0.96v28.3h-0.96zM71.31 0h0.96v28.3h-0.96zM73.23 0h2.64v28.3h-2.64zM76.84 0h0.96v28.3h-0.96zM80.44 0h2.64v28.3h-2.64zM84.04 0h0.96v28.3h-0.96zM85.96 0h0.96v28.3h-0.96zM87.88 0h2.64v28.3h-2.64zM91.48 0h0.96v28.3h-0.96zM95.08 0h2.64v28.3h-2.64zM98.69 0h0.96v28.3h-0.96zM100.61 0h0.96v28.3h-0.96zM102.53 0h0.96v28.3h-0.96zM104.45 0h2.64v28.3h-2.64zM109.73 0h2.64v28.3h-2.64zM113.33 0h0.96v28.3h-0.96zM115.25 0h0.96v28.3h-0.96zM117.17 0h2.64v28.3h-2.64zM120.78 0h2.64v28.3h-2.64zM126.06 0h0.96v28.3h-0.96zM127.98 0h0.96v28.3h-0.96zM129.90 0h0.96v28.3h-0.96zM131.82 0h0.96v28.3h-0.96zM133.74 0h0.96v28.3h-0.96zM137.34 0h2.64v28.3h-2.64zM140.94 0h0.96v28.3h-0.96zM142.87 0h2.64v28.3h-2.64zM146.47 0h2.64v28.3h-2.64zM150.07 0h0.96v28.3h-0.96zM153.67 0h2.64v28.3h-2.64zM157.27 0h0.96v28.3h-0.96zM159.19 0h0.96v28.3h-0.96zM161.11 0h0.96v28.3h-0.96zM164.72 0h0.96v28.3h-0.96zM166.64 0h2.64v28.3h-2.64zM170.24 0h2.64v28.3h-2.64zM173.84 0h0.96v28.3h-0.96z" fill="#07070c"/></svg>
<span class="t" style="left:582.40px;top:285.00px;font-size:11px;color:#0e0e14;font-weight:700;transform:scaleX(0.9683);">Label id :  S923556345</span>
<span class="t" style="left:800.50px;top:148.00px;font-size:13.5px;color:#1a1a1a;transform:scaleX(0.9464);">Identity</span>
<div class="a" style="left:800.5px;top:163.5px;width:128.2px;height:1px;background:#e9e9e9;"></div>
<span class="t" style="left:800.50px;top:180.00px;font-size:13.5px;color:#1a1a1a;transform:scaleX(0.8927);">Label ID</span>
<div class="a" style="left:800.5px;top:195.5px;width:128.2px;height:1px;background:#e9e9e9;"></div>
<span class="t" style="left:800.50px;top:212.00px;font-size:13.5px;color:#1a1a1a;transform:scaleX(0.9290);">Product Code</span>
<div class="a" style="left:800.5px;top:227.5px;width:128.2px;height:1px;background:#e9e9e9;"></div>
<span class="t" style="left:800.50px;top:243.00px;font-size:13.5px;color:#1a1a1a;transform:scaleX(0.9387);">Quantity</span>
<div class="a" style="left:800.5px;top:259.5px;width:128.2px;height:1px;background:#e9e9e9;"></div>
<span class="t" style="left:800.50px;top:275.00px;font-size:13.5px;color:#1a1a1a;transform:scaleX(0.9276);">Customer Code</span>
<div class="a" style="left:800.5px;top:291.5px;width:128.2px;height:1px;background:#e9e9e9;"></div>
<span class="t" style="left:800.50px;top:307.00px;font-size:13.5px;color:#1a1a1a;transform:scaleX(0.9394);">Customer revision</span>
<div class="a" style="left:800.5px;top:323.5px;width:128.2px;height:1px;background:#e9e9e9;"></div>
<span class="t" style="left:1148.90px;top:148.00px;font-size:13.5px;color:#1a1a1a;transform:scaleX(0.9273);">Status</span>
<div class="a" style="left:1148.9px;top:163.5px;width:128.4px;height:1px;background:#e9e9e9;"></div>
<span class="t" style="left:1148.90px;top:180.00px;font-size:13.5px;color:#1a1a1a;transform:scaleX(0.9628);">Timestamp</span>
<div class="a" style="left:1148.9px;top:195.5px;width:128.4px;height:1px;background:#e9e9e9;"></div>
<span class="t" style="left:1148.90px;top:212.00px;font-size:13.5px;color:#1a1a1a;transform:scaleX(0.9422);">Station</span>
<div class="a" style="left:1148.9px;top:227.5px;width:128.4px;height:1px;background:#e9e9e9;"></div>
<span class="t" style="left:1148.90px;top:243.00px;font-size:13.5px;color:#1a1a1a;transform:scaleX(0.8767);">User</span>
<div class="a" style="left:1148.9px;top:259.5px;width:128.4px;height:1px;background:#e9e9e9;"></div>
<span class="t" style="left:1148.90px;top:275.00px;font-size:13.5px;color:#1a1a1a;transform:scaleX(0.9359);">Package weight</span>
<div class="a" style="left:1148.9px;top:291.5px;width:128.4px;height:1px;background:#e9e9e9;"></div>
<span class="t" style="left:1148.90px;top:307.00px;font-size:13.5px;color:#1a1a1a;transform:scaleX(0.9303);">Package real weight</span>
<div class="a" style="left:1148.9px;top:323.5px;width:128.4px;height:1px;background:#e9e9e9;"></div>
<span class="t" style="left:933.00px;top:145.00px;font-size:13.3px;color:#111;font-weight:700;transform:scaleX(1.0337);">528,488</span>
<span class="t" style="left:933.00px;top:177.00px;font-size:13.3px;color:#111;font-weight:700;transform:scaleX(1.0419);">S923556345</span>
<span class="t" style="left:933.00px;top:208.00px;font-size:13.3px;color:#111;font-weight:700;transform:scaleX(0.9962);">CC338061ZUTYKYRA14</span>
<span class="t" style="left:933.00px;top:240.00px;font-size:13.3px;color:#111;font-weight:700;transform:scaleX(1.0506);">2.00</span>
<span class="t" style="left:933.00px;top:304.00px;font-size:13.3px;color:#111;font-weight:700;transform:scaleX(0.9316);">8</span>
<div class="a" style="left:933.3px;top:277.2px;width:3.8px;height:1.6px;background:#111;"></div>
<div class="a" style="left:1279.3px;top:142px;width:20.6px;height:16.7px;background:#65bd12;border-radius:2.5px;"></div>
<span class="t" style="left:1305.10px;top:144.00px;font-size:14.3px;color:#222;transform:scaleX(0.9046);">OK</span>
<span class="t" style="left:1279.30px;top:175.00px;font-size:12px;color:#111;font-weight:700;transform:scaleX(1.0819);">8/21/2024 7:18:08 PM</span>
<span class="t" style="left:1279.30px;top:206.00px;font-size:12px;color:#111;font-weight:700;transform:scaleX(1.0144);">HAL9001</span>
<span class="t" style="left:1279.30px;top:237.00px;font-size:12px;color:#111;font-weight:700;transform:scaleX(0.9975);">Rendszer adminisztrátor</span>
<span class="t" style="left:1304.00px;top:270.00px;font-size:12px;color:#111;font-weight:700;transform:scaleX(1.0656);">7,500</span>
<div class="a" style="left:363px;top:368.3px;width:296.5px;height:33.4px;background:#dadada;"></div>
<div class="a" style="left:662px;top:368.3px;width:296.3px;height:33.4px;background:#dadada;"></div>
<div class="a" style="left:960.3px;top:368.3px;width:296.4px;height:33.4px;background:#dadada;"></div>
<div class="a" style="left:1259.2px;top:368.3px;width:295.9px;height:33.4px;background:#b9b9b9;"></div>
<span class="t" style="left:468.70px;top:378.00px;font-size:14.8px;color:#111;font-weight:700;transform:scaleX(0.9573);">Package</span>
<span class="t" style="left:770.80px;top:378.00px;font-size:14.8px;color:#111;font-weight:700;transform:scaleX(0.9647);">Item #1</span>
<span class="t" style="left:1069.20px;top:378.00px;font-size:14.8px;color:#111;font-weight:700;transform:scaleX(0.9902);">Item #2</span>
<span class="t" style="left:1372.70px;top:378.00px;font-size:14.8px;color:#111;font-weight:700;transform:scaleX(0.9230);">Input Logs</span>
<div class="a" style="left:627.9px;top:372.3px;width:26.7px;height:25px;background:#c9c9c9;border-radius:1px;"></div>
<svg class="a" style="left:632.5px;top:382.1px;" width="17.6" height="9" viewBox="0 0 17.6 9"><path d="M0.2 0.9 V7.2 H6.6 L4.2 4.9 C6.4 3.1 8.2 2.6 9.8 2.6 C12.6 2.6 14.8 4.4 15.8 7.4 L17.4 6.9 C16.2 3.1 13.4 0.7 9.8 0.7 C7.4 0.7 5 1.7 2.8 3.5 Z" fill="#5a5a5a"/></svg>
<div class="a" style="left:926.6px;top:372.3px;width:26.7px;height:25px;background:#c9c9c9;border-radius:1px;"></div>
<svg class="a" style="left:931.2px;top:382.1px;" width="17.6" height="9" viewBox="0 0 17.6 9"><path d="M0.2 0.9 V7.2 H6.6 L4.2 4.9 C6.4 3.1 8.2 2.6 9.8 2.6 C12.6 2.6 14.8 4.4 15.8 7.4 L17.4 6.9 C16.2 3.1 13.4 0.7 9.8 0.7 C7.4 0.7 5 1.7 2.8 3.5 Z" fill="#5a5a5a"/></svg>
<div class="a" style="left:1225px;top:372.3px;width:26.7px;height:25px;background:#c9c9c9;border-radius:1px;"></div>
<svg class="a" style="left:1229.6px;top:382.1px;" width="17.6" height="9" viewBox="0 0 17.6 9"><path d="M0.2 0.9 V7.2 H6.6 L4.2 4.9 C6.4 3.1 8.2 2.6 9.8 2.6 C12.6 2.6 14.8 4.4 15.8 7.4 L17.4 6.9 C16.2 3.1 13.4 0.7 9.8 0.7 C7.4 0.7 5 1.7 2.8 3.5 Z" fill="#5a5a5a"/></svg>
<div class="a" style="left:373px;top:413.2px;width:281.7px;height:26.6px;background:#038203;"></div>
<div class="a" style="left:373px;top:441.1px;width:281.7px;height:75.6px;background:#e9e9e9;"></div>
<svg class="a" style="left:377.4px;top:420.1px;" width="17" height="13" viewBox="0 0 17 13"><path d="M0.8 7.2 L5.6 11.8 L16.2 0.8" fill="none" stroke="#fff" stroke-width="1.7"/></svg>
<span class="t" style="left:401.20px;top:420.00px;font-size:14.7px;color:#fff;font-weight:700;transform:scaleX(0.9349);">OEM1 BOX</span>
<span class="t" style="left:377.00px;top:445.00px;font-size:14px;color:#0c0c0c;font-weight:700;transform:scaleX(0.9040);">KLTBMW</span>
<span class="t" style="left:377.60px;top:466.00px;font-size:12.4px;color:#303030;transform:scaleX(0.9249);">Status</span>
<span class="t" style="left:377.60px;top:483.00px;font-size:12.4px;color:#0c0c0c;font-weight:700;transform:scaleX(0.9074);">Ok</span>
<span class="t" style="left:377.60px;top:502.00px;font-size:12.4px;color:#a6a6a6;transform:scaleX(0.9199);">7:13:16 PM</span>
<span class="t" style="left:611.20px;top:467.00px;font-size:12.4px;color:#303030;transform:scaleX(0.9258);">Weight</span>
<span class="t" style="left:611.20px;top:484.00px;font-size:12.6px;color:#0c0c0c;font-weight:700;transform:scaleX(1.0274);">3450</span>
<div class="a" style="left:671.2px;top:413px;width:282.2px;height:26.6px;background:#038203;"></div>
<div class="a" style="left:671.2px;top:440.9px;width:282.2px;height:73px;background:#e9e9e9;"></div>
<svg class="a" style="left:675.6px;top:420px;" width="17" height="13" viewBox="0 0 17 13"><path d="M0.8 7.2 L5.6 11.8 L16.2 0.8" fill="none" stroke="#fff" stroke-width="1.7"/></svg>
<span class="t" style="left:699.40px;top:420.00px;font-size:14.7px;color:#fff;font-weight:700;transform:scaleX(0.9180);">OEM1 BACK LABEL</span>
<span class="t" style="left:675.20px;top:445.00px;font-size:14px;color:#0c0c0c;font-weight:700;transform:scaleX(0.9957);">CE98451491033380610123456789131</span>
<span class="t" style="left:675.80px;top:465.00px;font-size:12.4px;color:#303030;transform:scaleX(0.9249);">Status</span>
<span class="t" style="left:675.80px;top:482.00px;font-size:12.4px;color:#0c0c0c;font-weight:700;transform:scaleX(0.9074);">Ok</span>
<span class="t" style="left:675.80px;top:498.00px;font-size:12.4px;color:#a6a6a6;transform:scaleX(0.9199);">7:14:12 PM</span>
<div class="a" style="left:671.2px;top:525px;width:282.2px;height:26.6px;background:#038203;"></div>
<div class="a" style="left:671.2px;top:552.9px;width:282.2px;height:73px;background:#e9e9e9;"></div>
<svg class="a" style="left:675.6px;top:532px;" width="17" height="13" viewBox="0 0 17 13"><path d="M0.8 7.2 L5.6 11.8 L16.2 0.8" fill="none" stroke="#fff" stroke-width="1.7"/></svg>
<span class="t" style="left:699.40px;top:532.00px;font-size:14.7px;color:#fff;font-weight:700;transform:scaleX(0.9503);">PART 12 ID</span>
<span class="t" style="left:675.20px;top:556.00px;font-size:14px;color:#0c0c0c;font-weight:700;transform:scaleX(1.0085);">355884581234567891256</span>
<span class="t" style="left:675.80px;top:576.00px;font-size:12.4px;color:#303030;transform:scaleX(0.9249);">Status</span>
<span class="t" style="left:675.80px;top:594.00px;font-size:12.4px;color:#0c0c0c;font-weight:700;transform:scaleX(0.9074);">Ok</span>
<span class="t" style="left:675.80px;top:610.00px;font-size:12.4px;color:#a6a6a6;transform:scaleX(0.9199);">7:14:47 PM</span>
<div class="a" style="left:671.2px;top:637px;width:282.2px;height:26.6px;background:#038203;"></div>
<div class="a" style="left:671.2px;top:664.9px;width:282.2px;height:85.1px;background:#e9e9e9;"></div>
<svg class="a" style="left:675.6px;top:644.2px;" width="17" height="13" viewBox="0 0 17 13"><path d="M0.8 7.2 L5.6 11.8 L16.2 0.8" fill="none" stroke="#fff" stroke-width="1.7"/></svg>
<span class="t" style="left:699.40px;top:644.00px;font-size:14.7px;color:#fff;font-weight:700;transform:scaleX(0.9420);">Visual checking OEM1</span>
<span class="t" style="left:675.20px;top:668.00px;font-size:14px;color:#0c0c0c;font-weight:700;transform:scaleX(1.0076);">5998880340772</span>
<span class="t" style="left:675.80px;top:688.00px;font-size:12.4px;color:#303030;transform:scaleX(0.9249);">Status</span>
<span class="t" style="left:675.80px;top:706.00px;font-size:12.4px;color:#0c0c0c;font-weight:700;transform:scaleX(0.9074);">Ok</span>
<span class="t" style="left:675.80px;top:735.00px;font-size:12.4px;color:#a6a6a6;transform:scaleX(0.9199);">7:14:57 PM</span>
<div class="a" style="left:671.2px;top:760px;width:282.2px;height:26.6px;background:#038203;"></div>
<div class="a" style="left:671.2px;top:787.9px;width:282.2px;height:74.1px;background:#e9e9e9;"></div>
<svg class="a" style="left:675.6px;top:768.1px;" width="17" height="13" viewBox="0 0 17 13"><path d="M0.8 7.2 L5.6 11.8 L16.2 0.8" fill="none" stroke="#fff" stroke-width="1.7"/></svg>
<span class="t" style="left:699.40px;top:768.00px;font-size:14.7px;color:#fff;font-weight:700;transform:scaleX(0.9222);">OEM1 BOOK</span>
<span class="t" style="left:675.20px;top:792.00px;font-size:14px;color:#0c0c0c;font-weight:700;transform:scaleX(1.0032);">353839193</span>
<span class="t" style="left:675.80px;top:812.00px;font-size:12.4px;color:#303030;transform:scaleX(0.9249);">Status</span>
<span class="t" style="left:675.80px;top:829.00px;font-size:12.4px;color:#0c0c0c;font-weight:700;transform:scaleX(0.9074);">Ok</span>
<span class="t" style="left:675.80px;top:846.00px;font-size:12.4px;color:#a6a6a6;transform:scaleX(0.9199);">7:15:07 PM</span>
<div class="a" style="left:671.2px;top:872px;width:282.2px;height:26.6px;background:#038203;"></div>
<div class="a" style="left:671.2px;top:899.9px;width:282.2px;height:85.8px;background:#e9e9e9;"></div>
<svg class="a" style="left:675.6px;top:879.2px;" width="17" height="13" viewBox="0 0 17 13"><path d="M0.8 7.2 L5.6 11.8 L16.2 0.8" fill="none" stroke="#fff" stroke-width="1.7"/></svg>
<span class="t" style="left:699.40px;top:879.00px;font-size:14.7px;color:#fff;font-weight:700;transform:scaleX(0.9462);">Warning label</span>
<span class="t" style="left:675.20px;top:903.00px;font-size:14px;color:#0c0c0c;font-weight:700;transform:scaleX(1.0032);">352368093</span>
<span class="t" style="left:675.80px;top:924.00px;font-size:12.4px;color:#303030;transform:scaleX(0.9249);">Status</span>
<span class="t" style="left:675.80px;top:942.00px;font-size:12.4px;color:#0c0c0c;font-weight:700;transform:scaleX(0.9074);">Ok</span>
<span class="t" style="left:675.80px;top:971.00px;font-size:12.4px;color:#a6a6a6;transform:scaleX(0.9199);">7:15:18 PM</span>
<div class="a" style="left:671.2px;top:996.3px;width:282.2px;height:0.8px;background:#3a9a3a;"></div>
<div class="a" style="left:872.1px;top:672px;width:80.1px;height:71px;background:#fff;"></div>
<svg class="a" style="left:872.1px;top:672px;" width="80.1" height="71" viewBox="0 0 80.1 71"><defs><linearGradient id="g671" x1="0" y1="1" x2="1" y2="0"><stop offset="0" stop-color="#10b428"/><stop offset=".55" stop-color="#22cc3c"/><stop offset="1" stop-color="#3fe055"/></linearGradient></defs><circle cx="37.2" cy="35.6" r="30.6" fill="none" stroke="#149214" stroke-width="4.6"/><path d="M6.3 34.6 L13.3 28.3 L30.5 43.2 L65.7 2.6 L75.1 15.8 L31.3 64.3 Z" fill="url(#g671)"/><path d="M6.3 34.6 L31.3 64.3 L34 61.3 L9.5 32 Z" fill="#0a9a20" opacity=".55"/></svg>
<div class="a" style="left:902.9px;top:902.5px;width:49.3px;height:80.5px;background:#fff;"></div>
<svg class="a" style="left:902.9px;top:902.5px;" width="49.3" height="80.5" viewBox="0 0 49.3 80.5"><path d="M6.9 4 V78.4" stroke="#333" stroke-width="0.7"/><path d="M6.9 73.8 H44.3" stroke="#333" stroke-width="0.7"/><path d="M5.5 1 h4 M5.6 48 h2.4 M5.6 19 h2" stroke="#444" stroke-width="0.7"/><rect x="15.5" y="8.0" width="2.0" height="0.8" fill="#222" opacity="0.50"/><rect x="28.5" y="8.0" width="1.5" height="0.8" fill="#222" opacity="0.79"/><rect x="32.5" y="8.0" width="1.5" height="0.8" fill="#222" opacity="0.78"/><rect x="35.5" y="8.0" width="1.5" height="0.8" fill="#222" opacity="0.79"/><rect x="9.0" y="11.5" width="3.0" height="0.8" fill="#222" opacity="0.54"/><rect x="12.5" y="11.5" width="1.5" height="0.8" fill="#222" opacity="0.53"/><rect x="18.0" y="11.5" width="2.0" height="0.8" fill="#222" opacity="0.54"/><rect x="28.0" y="11.5" width="1.0" height="0.8" fill="#222" opacity="0.78"/><rect x="33.0" y="11.5" width="3.0" height="0.8" fill="#222" opacity="0.63"/><rect x="9.0" y="15.0" width="3.0" height="0.8" fill="#222" opacity="0.47"/><rect x="26.5" y="15.0" width="1.5" height="0.8" fill="#222" opacity="0.64"/><rect x="28.5" y="15.0" width="2.0" height="0.8" fill="#222" opacity="0.68"/><rect x="11.5" y="19.0" width="3.0" height="0.8" fill="#222" opacity="0.42"/><rect x="16.0" y="19.0" width="3.0" height="0.8" fill="#222" opacity="0.70"/><rect x="20.0" y="19.0" width="2.0" height="0.8" fill="#222" opacity="0.57"/><rect x="24.5" y="19.0" width="1.5" height="0.8" fill="#222" opacity="0.69"/><rect x="26.5" y="19.0" width="3.0" height="0.8" fill="#222" opacity="0.57"/><rect x="32.0" y="19.0" width="1.5" height="0.8" fill="#222" opacity="0.80"/><rect x="9.0" y="22.0" width="2.0" height="0.8" fill="#222" opacity="0.52"/><rect x="12.0" y="22.0" width="1.5" height="0.8" fill="#222" opacity="0.73"/><rect x="17.5" y="22.0" width="2.0" height="0.8" fill="#222" opacity="0.60"/><rect x="9.0" y="27.0" width="2.0" height="2.0" fill="#222" opacity="0.59"/><rect x="12.5" y="27.0" width="2.0" height="2.0" fill="#222" opacity="0.66"/><rect x="16.0" y="27.0" width="3.0" height="2.0" fill="#222" opacity="0.74"/><rect x="24.5" y="27.0" width="1.5" height="2.0" fill="#222" opacity="0.47"/><rect x="27.0" y="27.0" width="3.0" height="2.0" fill="#222" opacity="0.43"/><rect x="31.5" y="27.0" width="3.0" height="2.0" fill="#222" opacity="0.71"/><rect x="9.0" y="50.0" width="3.0" height="2.0" fill="#222" opacity="0.62"/><rect x="13.5" y="50.0" width="2.0" height="2.0" fill="#222" opacity="0.41"/><rect x="16.0" y="50.0" width="3.0" height="2.0" fill="#222" opacity="0.47"/><rect x="26.0" y="50.0" width="1.0" height="2.0" fill="#222" opacity="0.44"/><rect x="27.5" y="50.0" width="3.0" height="2.0" fill="#222" opacity="0.41"/><rect x="31.5" y="50.0" width="2.0" height="2.0" fill="#222" opacity="0.64"/><rect x="35.0" y="50.0" width="1.5" height="2.0" fill="#222" opacity="0.76"/><rect x="9.0" y="54.0" width="2.0" height="0.8" fill="#222" opacity="0.51"/><rect x="18.0" y="54.0" width="2.0" height="0.8" fill="#222" opacity="0.62"/><rect x="23.5" y="54.0" width="3.0" height="0.8" fill="#222" opacity="0.63"/><rect x="28.0" y="54.0" width="2.0" height="0.8" fill="#222" opacity="0.46"/><rect x="34.5" y="54.0" width="1.0" height="0.8" fill="#222" opacity="0.76"/><rect x="9.0" y="58.5" width="3.0" height="0.8" fill="#222" opacity="0.63"/><rect x="13.5" y="58.5" width="1.5" height="0.8" fill="#222" opacity="0.75"/><rect x="16.5" y="58.5" width="3.0" height="0.8" fill="#222" opacity="0.79"/><rect x="24.0" y="58.5" width="3.0" height="0.8" fill="#222" opacity="0.74"/><rect x="30.5" y="58.5" width="3.0" height="0.8" fill="#222" opacity="0.41"/><rect x="9.0" y="62.0" width="3.0" height="0.8" fill="#222" opacity="0.66"/><rect x="13.0" y="62.0" width="1.5" height="0.8" fill="#222" opacity="0.71"/><rect x="18.0" y="62.0" width="2.0" height="0.8" fill="#222" opacity="0.59"/><rect x="30.5" y="62.0" width="1.0" height="0.8" fill="#222" opacity="0.45"/><rect x="11.0" y="67.0" width="1.5" height="0.8" fill="#222" opacity="0.50"/><rect x="16.0" y="67.0" width="1.5" height="0.8" fill="#222" opacity="0.71"/><rect x="29.5" y="67.0" width="1.0" height="0.8" fill="#222" opacity="0.40"/><rect x="34.5" y="67.0" width="2.0" height="0.8" fill="#222" opacity="0.59"/><rect x="16.5" y="70.5" width="1.0" height="0.8" fill="#222" opacity="0.49"/><rect x="31.5" y="70.5" width="1.5" height="0.8" fill="#222" opacity="0.47"/></svg>
<span class="t" style="left:818.20px;top:927.00px;font-size:12.4px;color:#303030;transform:scaleX(0.9284);">Weight</span>
<span class="t" style="left:818.20px;top:945.00px;font-size:12.6px;color:#0c0c0c;font-weight:700;transform:scaleX(1.0132);">2025</span>
<div class="a" style="left:970px;top:413px;width:282.2px;height:26.6px;background:#038203;"></div>
<div class="a" style="left:970px;top:440.9px;width:282.2px;height:73px;background:#e9e9e9;"></div>
<svg class="a" style="left:974.4px;top:420px;" width="17" height="13" viewBox="0 0 17 13"><path d="M0.8 7.2 L5.6 11.8 L16.2 0.8" fill="none" stroke="#fff" stroke-width="1.7"/></svg>
<span class="t" style="left:998.20px;top:420.00px;font-size:14.7px;color:#fff;font-weight:700;transform:scaleX(0.9180);">OEM1 BACK LABEL</span>
<span class="t" style="left:974.00px;top:445.00px;font-size:14px;color:#0c0c0c;font-weight:700;transform:scaleX(0.9957);">CE98451491033380610123456789132</span>
<span class="t" style="left:974.60px;top:465.00px;font-size:12.4px;color:#303030;transform:scaleX(0.9249);">Status</span>
<span class="t" style="left:974.60px;top:482.00px;font-size:12.4px;color:#0c0c0c;font-weight:700;transform:scaleX(0.9074);">Ok</span>
<span class="t" style="left:974.60px;top:498.00px;font-size:12.4px;color:#a6a6a6;transform:scaleX(0.9199);">7:16:28 PM</span>
<div class="a" style="left:970px;top:525px;width:282.2px;height:26.6px;background:#038203;"></div>
<div class="a" style="left:970px;top:552.9px;width:282.2px;height:73px;background:#e9e9e9;"></div>
<svg class="a" style="left:974.4px;top:532px;" width="17" height="13" viewBox="0 0 17 13"><path d="M0.8 7.2 L5.6 11.8 L16.2 0.8" fill="none" stroke="#fff" stroke-width="1.7"/></svg>
<span class="t" style="left:998.20px;top:532.00px;font-size:14.7px;color:#fff;font-weight:700;transform:scaleX(0.9503);">PART 12 ID</span>
<span class="t" style="left:974.00px;top:556.00px;font-size:14px;color:#0c0c0c;font-weight:700;transform:scaleX(1.0085);">355884581234567891257</span>
<span class="t" style="left:974.60px;top:576.00px;font-size:12.4px;color:#303030;transform:scaleX(0.9249);">Status</span>
<span class="t" style="left:974.60px;top:594.00px;font-size:12.4px;color:#0c0c0c;font-weight:700;transform:scaleX(0.9074);">Ok</span>
<span class="t" style="left:974.60px;top:610.00px;font-size:12.4px;color:#a6a6a6;transform:scaleX(0.9199);">7:16:53 PM</span>
<div class="a" style="left:970px;top:637px;width:282.2px;height:26.6px;background:#038203;"></div>
<div class="a" style="left:970px;top:664.9px;width:282.2px;height:85.1px;background:#e9e9e9;"></div>
<svg class="a" style="left:974.4px;top:644.2px;" width="17" height="13" viewBox="0 0 17 13"><path d="M0.8 7.2 L5.6 11.8 L16.2 0.8" fill="none" stroke="#fff" stroke-width="1.7"/></svg>
<span class="t" style="left:998.20px;top:644.00px;font-size:14.7px;color:#fff;font-weight:700;transform:scaleX(0.9420);">Visual checking OEM1</span>
<span class="t" style="left:974.00px;top:668.00px;font-size:14px;color:#0c0c0c;font-weight:700;transform:scaleX(1.0076);">5998880340772</span>
<span class="t" style="left:974.60px;top:688.00px;font-size:12.4px;color:#303030;transform:scaleX(0.9249);">Status</span>
<span class="t" style="left:974.60px;top:706.00px;font-size:12.4px;color:#0c0c0c;font-weight:700;transform:scaleX(0.9074);">Ok</span>
<span class="t" style="left:974.60px;top:735.00px;font-size:12.4px;color:#a6a6a6;transform:scaleX(0.9199);">7:17:04 PM</span>
<div class="a" style="left:970px;top:760px;width:282.2px;height:26.6px;background:#038203;"></div>
<div class="a" style="left:970px;top:787.9px;width:282.2px;height:74.1px;background:#e9e9e9;"></div>
<svg class="a" style="left:974.4px;top:768.1px;" width="17" height="13" viewBox="0 0 17 13"><path d="M0.8 7.2 L5.6 11.8 L16.2 0.8" fill="none" stroke="#fff" stroke-width="1.7"/></svg>
<span class="t" style="left:998.20px;top:768.00px;font-size:14.7px;color:#fff;font-weight:700;transform:scaleX(0.9222);">OEM1 BOOK</span>
<span class="t" style="left:974.00px;top:792.00px;font-size:14px;color:#0c0c0c;font-weight:700;transform:scaleX(1.0032);">353839193</span>
<span class="t" style="left:974.60px;top:812.00px;font-size:12.4px;color:#303030;transform:scaleX(0.9249);">Status</span>
<span class="t" style="left:974.60px;top:829.00px;font-size:12.4px;color:#0c0c0c;font-weight:700;transform:scaleX(0.9074);">Ok</span>
<span class="t" style="left:974.60px;top:846.00px;font-size:12.4px;color:#a6a6a6;transform:scaleX(0.9199);">7:17:16 PM</span>
<div class="a" style="left:970px;top:872px;width:282.2px;height:26.6px;background:#038203;"></div>
<div class="a" style="left:970px;top:899.9px;width:282.2px;height:85.8px;background:#e9e9e9;"></div>
<svg class="a" style="left:974.4px;top:879.2px;" width="17" height="13" viewBox="0 0 17 13"><path d="M0.8 7.2 L5.6 11.8 L16.2 0.8" fill="none" stroke="#fff" stroke-width="1.7"/></svg>
<span class="t" style="left:998.20px;top:879.00px;font-size:14.7px;color:#fff;font-weight:700;transform:scaleX(0.9462);">Warning label</span>
<span class="t" style="left:974.00px;top:903.00px;font-size:14px;color:#0c0c0c;font-weight:700;transform:scaleX(1.0032);">352368093</span>
<span class="t" style="left:974.60px;top:924.00px;font-size:12.4px;color:#303030;transform:scaleX(0.9249);">Status</span>
<span class="t" style="left:974.60px;top:942.00px;font-size:12.4px;color:#0c0c0c;font-weight:700;transform:scaleX(0.9074);">Ok</span>
<span class="t" style="left:974.60px;top:971.00px;font-size:12.4px;color:#a6a6a6;transform:scaleX(0.9199);">7:17:55 PM</span>
<div class="a" style="left:970px;top:996.3px;width:282.2px;height:0.8px;background:#3a9a3a;"></div>
<div class="a" style="left:1170.9px;top:672px;width:80.1px;height:71px;background:#fff;"></div>
<svg class="a" style="left:1170.9px;top:672px;" width="80.1" height="71" viewBox="0 0 80.1 71"><defs><linearGradient id="g970" x1="0" y1="1" x2="1" y2="0"><stop offset="0" stop-color="#10b428"/><stop offset=".55" stop-color="#22cc3c"/><stop offset="1" stop-color="#3fe055"/></linearGradient></defs><circle cx="37.2" cy="35.6" r="30.6" fill="none" stroke="#149214" stroke-width="4.6"/><path d="M6.3 34.6 L13.3 28.3 L30.5 43.2 L65.7 2.6 L75.1 15.8 L31.3 64.3 Z" fill="url(#g970)"/><path d="M6.3 34.6 L31.3 64.3 L34 61.3 L9.5 32 Z" fill="#0a9a20" opacity=".55"/></svg>
<div class="a" style="left:1201.7px;top:902.5px;width:49.3px;height:80.5px;background:#fff;"></div>
<svg class="a" style="left:1201.7px;top:902.5px;" width="49.3" height="80.5" viewBox="0 0 49.3 80.5"><path d="M6.9 4 V78.4" stroke="#333" stroke-width="0.7"/><path d="M6.9 73.8 H44.3" stroke="#333" stroke-width="0.7"/><path d="M5.5 1 h4 M5.6 48 h2.4 M5.6 19 h2" stroke="#444" stroke-width="0.7"/><rect x="15.5" y="8.0" width="2.0" height="0.8" fill="#222" opacity="0.50"/><rect x="28.5" y="8.0" width="1.5" height="0.8" fill="#222" opacity="0.79"/><rect x="32.5" y="8.0" width="1.5" height="0.8" fill="#222" opacity="0.78"/><rect x="35.5" y="8.0" width="1.5" height="0.8" fill="#222" opacity="0.79"/><rect x="9.0" y="11.5" width="3.0" height="0.8" fill="#222" opacity="0.54"/><rect x="12.5" y="11.5" width="1.5" height="0.8" fill="#222" opacity="0.53"/><rect x="18.0" y="11.5" width="2.0" height="0.8" fill="#222" opacity="0.54"/><rect x="28.0" y="11.5" width="1.0" height="0.8" fill="#222" opacity="0.78"/><rect x="33.0" y="11.5" width="3.0" height="0.8" fill="#222" opacity="0.63"/><rect x="9.0" y="15.0" width="3.0" height="0.8" fill="#222" opacity="0.47"/><rect x="26.5" y="15.0" width="1.5" height="0.8" fill="#222" opacity="0.64"/><rect x="28.5" y="15.0" width="2.0" height="0.8" fill="#222" opacity="0.68"/><rect x="11.5" y="19.0" width="3.0" height="0.8" fill="#222" opacity="0.42"/><rect x="16.0" y="19.0" width="3.0" height="0.8" fill="#222" opacity="0.70"/><rect x="20.0" y="19.0" width="2.0" height="0.8" fill="#222" opacity="0.57"/><rect x="24.5" y="19.0" width="1.5" height="0.8" fill="#222" opacity="0.69"/><rect x="26.5" y="19.0" width="3.0" height="0.8" fill="#222" opacity="0.57"/><rect x="32.0" y="19.0" width="1.5" height="0.8" fill="#222" opacity="0.80"/><rect x="9.0" y="22.0" width="2.0" height="0.8" fill="#222" opacity="0.52"/><rect x="12.0" y="22.0" width="1.5" height="0.8" fill="#222" opacity="0.73"/><rect x="17.5" y="22.0" width="2.0" height="0.8" fill="#222" opacity="0.60"/><rect x="9.0" y="27.0" width="2.0" height="2.0" fill="#222" opacity="0.59"/><rect x="12.5" y="27.0" width="2.0" height="2.0" fill="#222" opacity="0.66"/><rect x="16.0" y="27.0" width="3.0" height="2.0" fill="#222" opacity="0.74"/><rect x="24.5" y="27.0" width="1.5" height="2.0" fill="#222" opacity="0.47"/><rect x="27.0" y="27.0" width="3.0" height="2.0" fill="#222" opacity="0.43"/><rect x="31.5" y="27.0" width="3.0" height="2.0" fill="#222" opacity="0.71"/><rect x="9.0" y="50.0" width="3.0" height="2.0" fill="#222" opacity="0.62"/><rect x="13.5" y="50.0" width="2.0" height="2.0" fill="#222" opacity="0.41"/><rect x="16.0" y="50.0" width="3.0" height="2.0" fill="#222" opacity="0.47"/><rect x="26.0" y="50.0" width="1.0" height="2.0" fill="#222" opacity="0.44"/><rect x="27.5" y="50.0" width="3.0" height="2.0" fill="#222" opacity="0.41"/><rect x="31.5" y="50.0" width="2.0" height="2.0" fill="#222" opacity="0.64"/><rect x="35.0" y="50.0" width="1.5" height="2.0" fill="#222" opacity="0.76"/><rect x="9.0" y="54.0" width="2.0" height="0.8" fill="#222" opacity="0.51"/><rect x="18.0" y="54.0" width="2.0" height="0.8" fill="#222" opacity="0.62"/><rect x="23.5" y="54.0" width="3.0" height="0.8" fill="#222" opacity="0.63"/><rect x="28.0" y="54.0" width="2.0" height="0.8" fill="#222" opacity="0.46"/><rect x="34.5" y="54.0" width="1.0" height="0.8" fill="#222" opacity="0.76"/><rect x="9.0" y="58.5" width="3.0" height="0.8" fill="#222" opacity="0.63"/><rect x="13.5" y="58.5" width="1.5" height="0.8" fill="#222" opacity="0.75"/><rect x="16.5" y="58.5" width="3.0" height="0.8" fill="#222" opacity="0.79"/><rect x="24.0" y="58.5" width="3.0" height="0.8" fill="#222" opacity="0.74"/><rect x="30.5" y="58.5" width="3.0" height="0.8" fill="#222" opacity="0.41"/><rect x="9.0" y="62.0" width="3.0" height="0.8" fill="#222" opacity="0.66"/><rect x="13.0" y="62.0" width="1.5" height="0.8" fill="#222" opacity="0.71"/><rect x="18.0" y="62.0" width="2.0" height="0.8" fill="#222" opacity="0.59"/><rect x="30.5" y="62.0" width="1.0" height="0.8" fill="#222" opacity="0.45"/><rect x="11.0" y="67.0" width="1.5" height="0.8" fill="#222" opacity="0.50"/><rect x="16.0" y="67.0" width="1.5" height="0.8" fill="#222" opacity="0.71"/><rect x="29.5" y="67.0" width="1.0" height="0.8" fill="#222" opacity="0.40"/><rect x="34.5" y="67.0" width="2.0" height="0.8" fill="#222" opacity="0.59"/><rect x="16.5" y="70.5" width="1.0" height="0.8" fill="#222" opacity="0.49"/><rect x="31.5" y="70.5" width="1.5" height="0.8" fill="#222" opacity="0.47"/></svg>
<span class="t" style="left:1117.00px;top:927.00px;font-size:12.4px;color:#303030;transform:scaleX(0.9284);">Weight</span>
<span class="t" style="left:1117.00px;top:945.00px;font-size:12.6px;color:#0c0c0c;font-weight:700;transform:scaleX(1.0132);">2025</span>
<span class="t" style="left:1264.60px;top:408.00px;font-size:14.7px;color:#9c9c9c;transform:scaleX(0.9823);">7:09:55 PM:</span>
<span class="t" style="left:1346.90px;top:408.00px;font-size:14.7px;color:#141414;transform:scaleX(1.0092);">Start new data recording</span>
<span class="t" style="left:1264.60px;top:426.00px;font-size:14.7px;color:#9c9c9c;transform:scaleX(0.9823);">7:09:55 PM:</span>
<span class="t" style="left:1346.90px;top:426.00px;font-size:14.7px;color:#141414;transform:scaleX(1.0033);"># Reading product number</span>
<span class="t" style="left:1264.60px;top:444.00px;font-size:14.7px;color:#9c9c9c;transform:scaleX(0.9823);">7:10:55 PM:</span>
<span class="t" style="left:1346.90px;top:444.00px;font-size:14.7px;color:#2a8c8c;transform:scaleX(0.9858);">P33380610KLTBMWR14</span>
<span class="t" style="left:1264.60px;top:462.00px;font-size:14.7px;color:#9c9c9c;transform:scaleX(0.9823);">7:10:55 PM:</span>
<span class="t" style="left:1346.90px;top:462.00px;font-size:14.7px;color:#141414;transform:scaleX(1.0094);"># Reading number of items</span>
<span class="t" style="left:1264.60px;top:480.00px;font-size:14.7px;color:#9c9c9c;transform:scaleX(0.9823);">7:10:55 PM:</span>
<span class="t" style="left:1346.90px;top:480.00px;font-size:14.7px;color:#141414;transform:scaleX(0.9738);"># Reading Label ID (S)</span>
<span class="t" style="left:1264.60px;top:497.00px;font-size:14.7px;color:#9c9c9c;transform:scaleX(0.9960);">7:11:07 PM:</span>
<span class="t" style="left:1346.90px;top:497.00px;font-size:14.7px;color:#2a8c8c;transform:scaleX(1.0021);">S123456789</span>
<span class="t" style="left:1264.60px;top:515.00px;font-size:14.7px;color:#9c9c9c;transform:scaleX(0.9960);">7:11:07 PM:</span>
<span class="t" style="left:1346.90px;top:515.00px;font-size:14.7px;color:#e02129;transform:scaleX(0.9826);">Invalid Label ID!</span>
<span class="t" style="left:1264.60px;top:533.00px;font-size:14.7px;color:#9c9c9c;transform:scaleX(0.9960);">7:11:19 PM:</span>
<span class="t" style="left:1346.90px;top:533.00px;font-size:14.7px;color:#2a8c8c;transform:scaleX(1.0021);">S923456789</span>
<span class="t" style="left:1264.60px;top:551.00px;font-size:14.7px;color:#9c9c9c;transform:scaleX(0.9960);">7:11:19 PM:</span>
<span class="t" style="left:1346.90px;top:551.00px;font-size:14.7px;color:#e02129;transform:scaleX(0.9826);">Invalid Label ID!</span>
<span class="t" style="left:1264.60px;top:569.00px;font-size:14.7px;color:#9c9c9c;transform:scaleX(0.9960);">7:11:26 PM:</span>
<span class="t" style="left:1346.90px;top:569.00px;font-size:14.7px;color:#2a8c8c;transform:scaleX(1.0021);">S923556789</span>
<span class="t" style="left:1264.60px;top:586.00px;font-size:14.7px;color:#9c9c9c;transform:scaleX(0.9960);">7:11:26 PM:</span>
<span class="t" style="left:1346.90px;top:586.00px;font-size:14.7px;color:#e02129;transform:scaleX(0.9826);">Invalid Label ID!</span>
<span class="t" style="left:1264.60px;top:604.00px;font-size:14.7px;color:#9c9c9c;transform:scaleX(0.9960);">7:11:44 PM:</span>
<span class="t" style="left:1346.90px;top:604.00px;font-size:14.7px;color:#2a8c8c;">S92355678</span>
<span class="t" style="left:1264.60px;top:622.00px;font-size:14.7px;color:#9c9c9c;transform:scaleX(0.9960);">7:11:44 PM:</span>
<span class="t" style="left:1346.90px;top:622.00px;font-size:14.7px;color:#e02129;transform:scaleX(0.9826);">Invalid Label ID!</span>
<span class="t" style="left:1264.60px;top:640.00px;font-size:14.7px;color:#9c9c9c;transform:scaleX(0.9823);">7:12:56 PM:</span>
<span class="t" style="left:1346.90px;top:640.00px;font-size:14.7px;color:#2a8c8c;transform:scaleX(1.0021);">S923556345</span>
<span class="t" style="left:1264.60px;top:658.00px;font-size:14.7px;color:#9c9c9c;transform:scaleX(0.9823);">7:12:56 PM:</span>
<span class="t" style="left:1346.90px;top:658.00px;font-size:14.7px;color:#141414;transform:scaleX(0.9907);"># BMW lada_doboz</span>
<span class="t" style="left:1264.60px;top:675.00px;font-size:14.7px;color:#9c9c9c;transform:scaleX(0.9823);">7:13:16 PM:</span>
<span class="t" style="left:1346.90px;top:675.00px;font-size:14.7px;color:#2a8c8c;transform:scaleX(0.9636);">KLTBMW</span>
<span class="t" style="left:1264.60px;top:693.00px;font-size:14.7px;color:#9c9c9c;transform:scaleX(0.9823);">7:13:16 PM:</span>
<span class="t" style="left:1346.90px;top:693.00px;font-size:14.7px;color:#141414;transform:scaleX(0.9549);"># BMW HÁTSÓ CÍMKE</span>
<span class="t" style="left:1264.60px;top:711.00px;font-size:14.7px;color:#9c9c9c;transform:scaleX(0.9823);">7:13:27 PM:</span>
<span class="t" style="left:1346.90px;top:711.00px;font-size:14.7px;color:#2a8c8c;transform:scaleX(1.0086);">CE98451491033380610123456789123</span>
<span class="t" style="left:1264.60px;top:729.00px;font-size:14.7px;color:#9c9c9c;transform:scaleX(0.9823);">7:13:27 PM:</span>
<span class="t" style="left:1346.90px;top:729.00px;font-size:14.7px;color:#e02129;transform:scaleX(0.9940);">This unique code has already been recorded!</span>
<span class="t" style="left:1264.60px;top:747.00px;font-size:14.7px;color:#9c9c9c;transform:scaleX(0.9823);">7:13:41 PM:</span>
<span class="t" style="left:1346.90px;top:747.00px;font-size:14.7px;color:#2a8c8c;transform:scaleX(1.0086);">CE88451491033380610123456789123</span>
<span class="t" style="left:1264.60px;top:765.00px;font-size:14.7px;color:#9c9c9c;transform:scaleX(0.9823);">7:13:41 PM:</span>
<span class="t" style="left:1346.90px;top:765.00px;font-size:14.7px;color:#e02129;">The scanned value is invalid or unknown!</span>
<span class="t" style="left:1264.60px;top:782.00px;font-size:14.7px;color:#9c9c9c;transform:scaleX(0.9823);">7:14:12 PM:</span>
<span class="t" style="left:1346.90px;top:782.00px;font-size:14.7px;color:#2a8c8c;transform:scaleX(1.0058);">CE98451491033380610123456789131</span>
<span class="t" style="left:1264.60px;top:800.00px;font-size:14.7px;color:#9c9c9c;transform:scaleX(0.9823);">7:14:12 PM:</span>
<span class="t" style="left:1346.90px;top:800.00px;font-size:14.7px;color:#141414;transform:scaleX(1.0169);"># Pigtail C markolat</span>
<span class="t" style="left:1264.60px;top:818.00px;font-size:14.7px;color:#9c9c9c;transform:scaleX(0.9823);">7:14:29 PM:</span>
<span class="t" style="left:1346.90px;top:818.00px;font-size:14.7px;color:#2a8c8c;transform:scaleX(1.0172);">355884581234567891246</span>
<span class="t" style="left:1264.60px;top:836.00px;font-size:14.7px;color:#9c9c9c;transform:scaleX(0.9823);">7:14:29 PM:</span>
<span class="t" style="left:1346.90px;top:836.00px;font-size:14.7px;color:#e02129;transform:scaleX(0.9940);">This unique code has already been recorded!</span>
<span class="t" style="left:1264.60px;top:854.00px;font-size:14.7px;color:#9c9c9c;transform:scaleX(0.9823);">7:14:47 PM:</span>
<span class="t" style="left:1346.90px;top:854.00px;font-size:14.7px;color:#2a8c8c;transform:scaleX(1.0172);">355884581234567891256</span>
<span class="t" style="left:1264.60px;top:871.00px;font-size:14.7px;color:#9c9c9c;transform:scaleX(0.9823);">7:14:47 PM:</span>
<span class="t" style="left:1346.90px;top:871.00px;font-size:14.7px;color:#141414;transform:scaleX(0.9744);"># GEN 2 ICCPD vizualis ellenorzes</span>
<span class="t" style="left:1264.60px;top:889.00px;font-size:14.7px;color:#9c9c9c;transform:scaleX(0.9823);">7:14:57 PM:</span>
<span class="t" style="left:1346.90px;top:889.00px;font-size:14.7px;color:#2a8c8c;transform:scaleX(1.0169);">5998880340772</span>
<span class="t" style="left:1264.60px;top:907.00px;font-size:14.7px;color:#9c9c9c;transform:scaleX(0.9823);">7:14:57 PM:</span>
<span class="t" style="left:1346.90px;top:907.00px;font-size:14.7px;color:#141414;transform:scaleX(0.9912);"># BMW könyv</span>
<span class="t" style="left:1264.60px;top:925.00px;font-size:14.7px;color:#9c9c9c;transform:scaleX(0.9823);">7:15:07 PM:</span>
<span class="t" style="left:1346.90px;top:925.00px;font-size:14.7px;color:#2a8c8c;transform:scaleX(1.0173);">353839193</span>
<span class="t" style="left:1264.60px;top:943.00px;font-size:14.7px;color:#9c9c9c;transform:scaleX(0.9823);">7:15:07 PM:</span>
<span class="t" style="left:1346.90px;top:943.00px;font-size:14.7px;color:#141414;"># Warning label</span>
<span class="t" style="left:1264.60px;top:960.00px;font-size:14.7px;color:#9c9c9c;transform:scaleX(0.9823);">7:15:18 PM:</span>
<span class="t" style="left:1346.90px;top:960.00px;font-size:14.7px;color:#2a8c8c;transform:scaleX(1.0173);">352368093</span>
<span class="t" style="left:1264.60px;top:978.00px;font-size:14.7px;color:#9c9c9c;transform:scaleX(0.9823);">7:15:18 PM:</span>
<span class="t" style="left:1346.90px;top:978.00px;font-size:14.7px;color:#141414;transform:scaleX(1.0054);"># BMW késztermék</span>
<div class="a" style="left:1912.2px;top:420px;width:3.4px;height:377px;background:#e6e6e8;"></div>
</body></html>
